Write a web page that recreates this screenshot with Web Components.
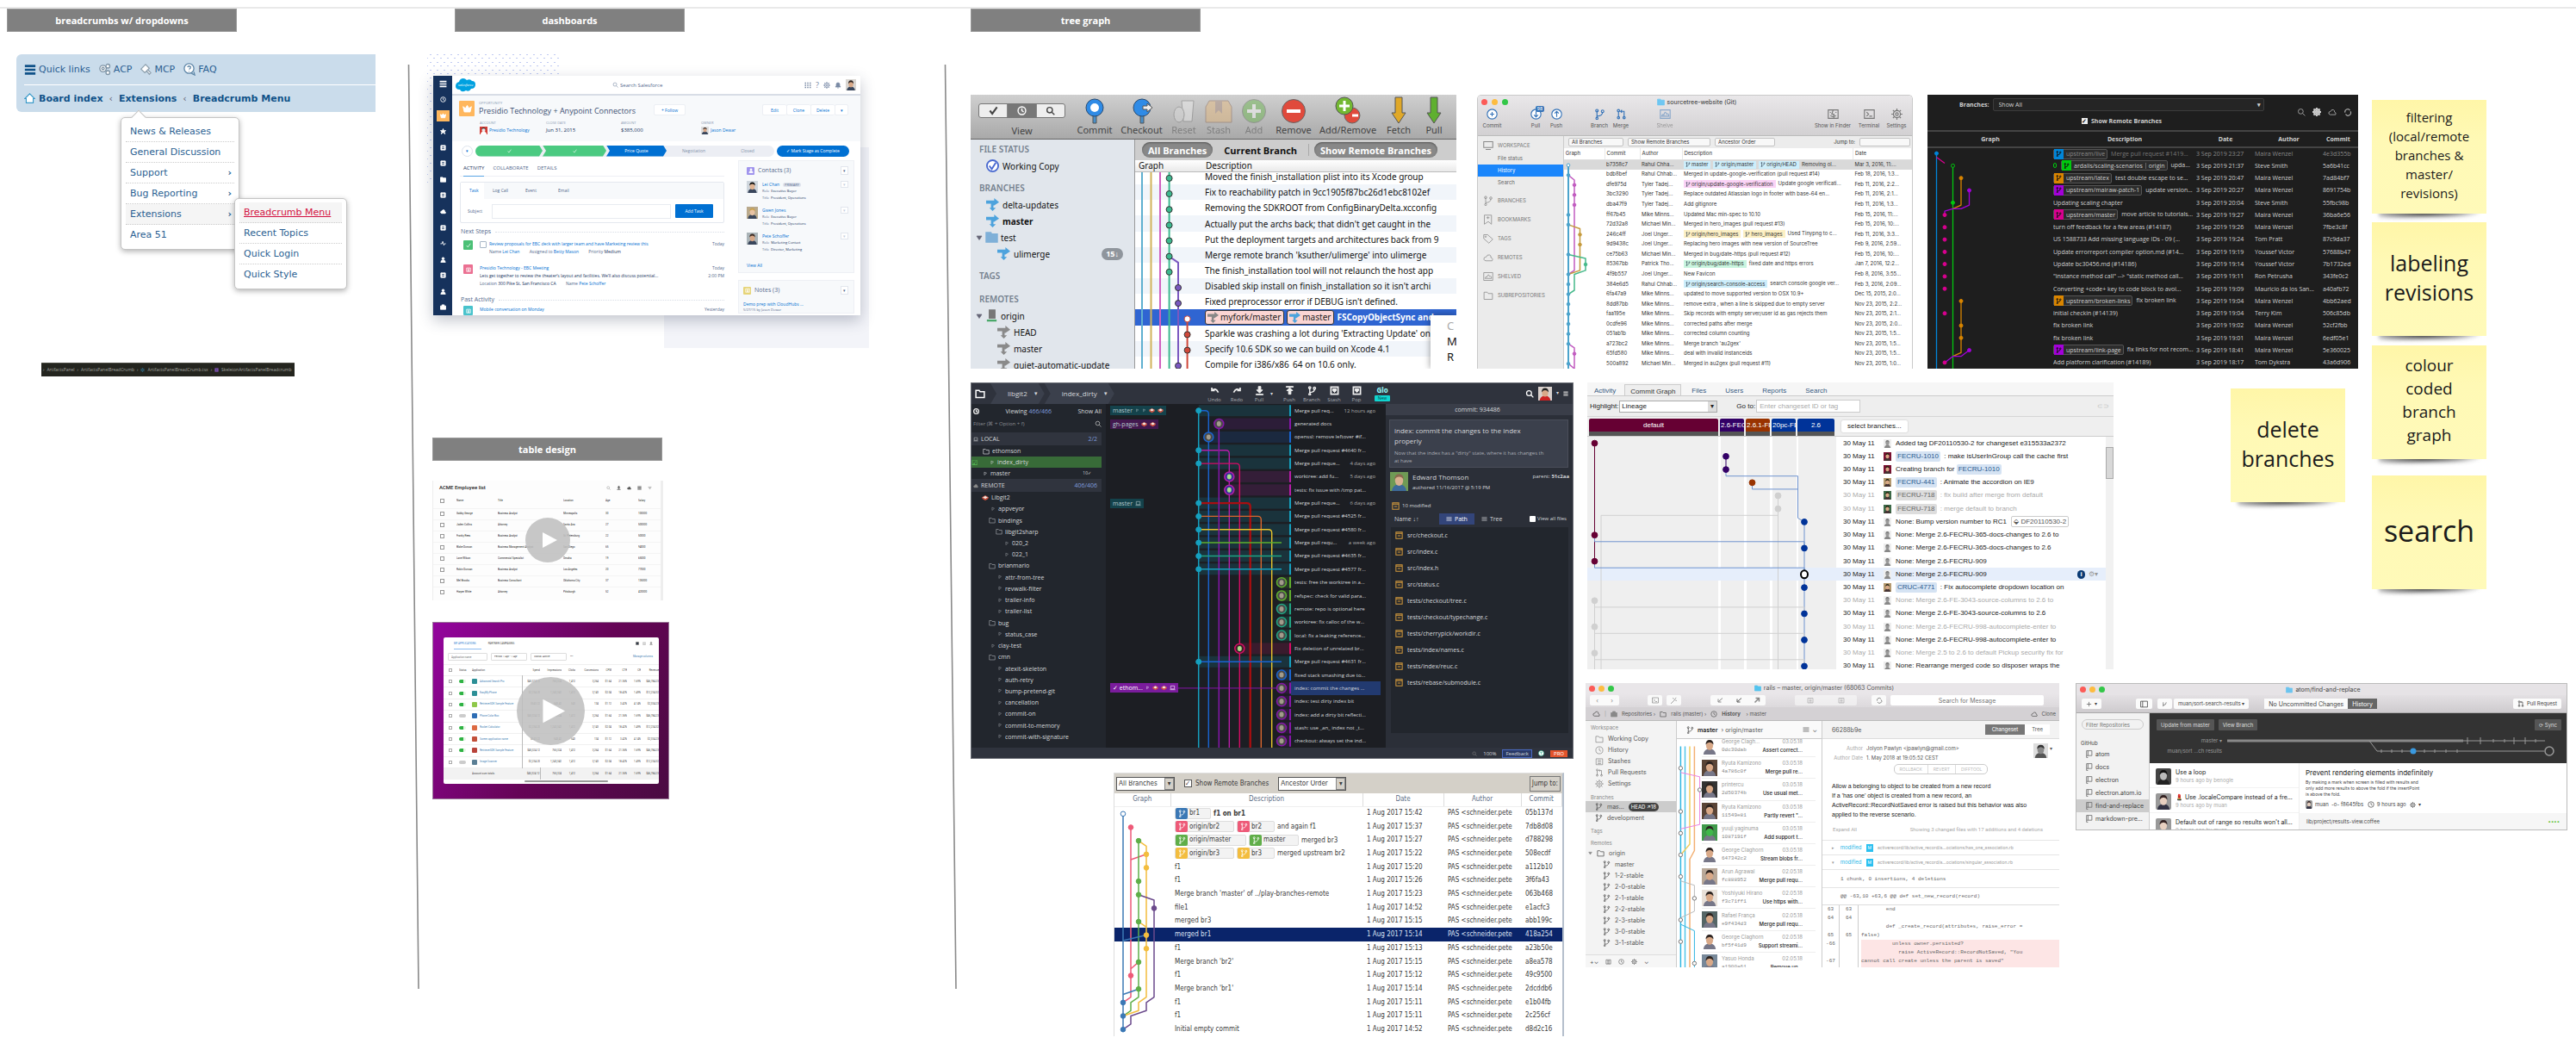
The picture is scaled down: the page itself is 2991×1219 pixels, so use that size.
<!DOCTYPE html>
<html lang="en">
<head>
<meta charset="utf-8">
<title>Research board</title>
<style>
html,body{margin:0;height:100%}
body{background:#fff;font-family:"Open Sans","Noto Sans",sans-serif;color:#222}
/* Free canvas: each captured window is pinned on the board */
research-board>*{position:absolute}
.t1{left:8px;top:10px}.t2{left:528px;top:10px}.t3{left:1127px;top:10px}.t4{left:502px;top:508px}
crumb-nav{left:19px;top:63px;width:417px}
editor-crumbs{left:48px;top:421px;width:294px}
crm-dashboard{left:496px;top:59px;width:513px;height:345px}
employee-table{left:502px;top:558px;width:268px;height:139px}
campaign-table{left:502px;top:722px;width:275px;height:206px}
tree-classic{left:1127px;top:110px;width:564px;height:318px}
tree-modern{left:1715px;top:110px;width:506px;height:318px}
git-graph{left:2238px;top:110px;width:500px;height:318px}
kraken-client{left:1127px;top:444px;width:700px;height:437px}
commit-graph{left:1843px;top:444px;width:611px;height:333px}
tower-client{left:1841px;top:793px;width:550px;height:330px}
hub-client{left:2410px;top:793px;width:571px;height:171px}
tree-windows{left:1293px;top:897px;width:523px;height:306px}
.n1{left:2754px;top:116px;--size:15px;--line:22px}
.n2{left:2754px;top:258px;--size:25px;--line:34px}
.n3{left:2754px;top:401px;--size:19px;--line:27px}
.n4{left:2754px;top:552px;--size:34px;--line:46px}
.n5{left:2590px;top:451px;--size:25px;--line:34px}
</style>
</head>
<body>
<research-board>
  <board-tag class="t1">breadcrumbs w/ dropdowns</board-tag>
  <board-tag class="t2">dashboards</board-tag>
  <board-tag class="t3">tree graph</board-tag>
  <board-tag class="t4">table design</board-tag>
  <crumb-nav></crumb-nav>
  <editor-crumbs></editor-crumbs>
  <crm-dashboard></crm-dashboard>
  <employee-table></employee-table>
  <campaign-table></campaign-table>
  <tree-classic></tree-classic>
  <tree-modern></tree-modern>
  <git-graph></git-graph>
  <kraken-client></kraken-client>
  <commit-graph></commit-graph>
  <tower-client></tower-client>
  <hub-client></hub-client>
  <tree-windows></tree-windows>
  <sticky-note class="n1">filtering<br>(local/remote<br>branches &amp;<br>master/<br>revisions)</sticky-note>
  <sticky-note class="n2">labeling<br>revisions</sticky-note>
  <sticky-note class="n3">colour<br>coded<br>branch<br>graph</sticky-note>
  <sticky-note class="n4">search</sticky-note>
  <sticky-note class="n5">delete<br>branches</sticky-note>
</research-board>
<script>
const base=`
:host,*,::before,::after{box-sizing:border-box}
:host{display:block;overflow:hidden}
button,input,select{font:inherit;color:inherit;border:0;padding:0;margin:0;background:none;appearance:none;border-radius:0;min-width:0}
a{color:inherit;text-decoration:none}
ul,ol{list-style:none;margin:0;padding:0}
p,h2,h3{margin:0;font:inherit}
table{border-collapse:collapse;table-layout:fixed;width:100%}
td,th{padding:0;font-weight:400;text-align:left;white-space:nowrap;overflow:hidden;text-overflow:ellipsis;line-height:1}
svg{display:block;flex:none}
.row{display:flex;align-items:center}
.grow{flex:1;min-width:0}
`;
const define=(name,css,html)=>customElements.define(name,class extends HTMLElement{
  connectedCallback(){
    if(this.shadowRoot)return;
    this.attachShadow({mode:'open'}).innerHTML='<style>'+base+css+'</style>'+html;
  }
});
const icons={
  menu:'<path d="M1 3h14M1 8h14M1 13h14" stroke-width="3"/>',
  home:'<path d="M1 8 8 1l7 7h-2v6H3V8z" fill="#fff"/>',
  gears:'<circle cx="6" cy="7" r="4" fill="#fff"/><circle cx="6" cy="7" r="1.5"/><circle cx="12" cy="4" r="2.4" fill="#fff"/><circle cx="12" cy="12" r="2.4" fill="#fff"/>',
  hammer:'<path d="M2 7 8 1l5 5-6 6zM9 9l4 5 2-2-4-4" fill="#fff"/>',
  faq:'<circle cx="8" cy="7" r="6" fill="#fff"/><path d="M6 5q2-2 4 0 0 2-2 3M8 10v1M11 13l4 2-1-4"/>',
  search:'<circle cx="7" cy="7" r="4.6"/><path d="m10.500 10.500 4.500 4.500"/>',
  check:'<path d="m2 8 4 5 8-11"/>',
  tick:'<circle cx="8" cy="8" r="7" fill="#fff"/><path d="m4 8 3 4 5-8"/>',
  clock:'<circle cx="8" cy="8" r="6.500"/><path d="M8 4v4l3 2"/>',
  gear:'<circle cx="8" cy="8" r="5" /><circle cx="8" cy="8" r="2"/><path d="M8 0v3M8 13v3M0 8h3M13 8h3M2.300 2.300l2 2M11.700 11.700l2 2M2.300 13.700l2-2M11.700 4.300l2-2"/>',
  bell:'<path d="M2 12h12l-2-3V6a4 4 0 0 0-8 0v3zM6 14h4" fill="currentColor"/>',
  grid:'<path d="M1 3h3M6.500 3h3M12 3h3M1 8h3M6.500 8h3M12 8h3M1 13h3M6.500 13h3M12 13h3" stroke-width="3"/>',
  crown:'<path d="m1 4 4 3 3-5 3 5 4-3-2 9H3z" fill="currentColor"/>',
  star:'<path d="m8 1 2 5h5l-4 3 2 6-5-4-5 4 2-6-4-3h5z" fill="currentColor"/>',
  box:'<path d="M2 2h12v12H2z" fill="currentColor"/><path d="M5 6h6M5 10h6" stroke="#16325c" stroke-width="2"/>',
  person:'<circle cx="8" cy="5" r="3" fill="currentColor"/><path d="M2 15q0-6 6-6t6 6z" fill="currentColor"/>',
  bag:'<path d="M1 5h14v9H1zM5 5V2h6v3" fill="currentColor"/>',
  pulse:'<path d="M1 9h4l2-6 3 10 2-4h3" stroke-width="2"/>',
  folder:'<path d="M1.500 3h5l1.500 2h6.500v9h-13z"/>',
  folderf:'<path d="M1 2h6l1 2h7v10H1z" fill="currentColor"/>',
  server:'<path d="M5 1h7v10H5z" fill="currentColor"/><path d="M2 14h12" stroke="#4aa86a" stroke-width="2.500"/>',
  branch:'<path d="M4 3v10M4 11q8 0 8-6"/><circle cx="4" cy="3" r="1.800"/><circle cx="4" cy="14" r="1.500"/><circle cx="12" cy="4" r="1.800"/>',
  merge:'<path d="M4 4v9M7 4h5v9M9 2 7 4l2 2"/><circle cx="4" cy="3" r="1.600"/><circle cx="4" cy="13" r="1.600"/><circle cx="12" cy="13" r="1.600"/>',
  tri:'<path d="M5 3v9l7-6z"/>',
  trid:'<path d="M2 4h12l-6 9z" fill="currentColor"/>',
  laptop:'<path d="M3 3h10v8H3zM1 13h14"/>',
  cloud:'<path d="M4 13q-4-1-2-5 2-1 3-1 1-4 5-3 3 1 2 4 4 1 2 5z"/>',
  cloudf:'<path d="M4 13q-4-1-2-5 2-1 3-1 1-4 5-3 3 1 2 4 4 1 2 5z" fill="currentColor"/>',
  undo:'<path d="M3 3v5h5M3 8q6-6 11 3" stroke-width="2.500"/>',
  redo:'<path d="M13 3v5H8M13 8Q7 2 2 11" stroke-width="2.500"/>',
  down:'<path d="M6 1h4v6h3l-5 5-5-5h3zM2 14h12v1H2z" fill="currentColor"/>',
  up:'<path d="M6 14h4V8h3L8 3 3 8h3zM2 1h12v1H2z" fill="currentColor"/>',
  stash:'<path d="M2 2h12v12H2z" stroke-width="2.500"/><path d="M5 5h6v3l-3 3-3-3z" fill="currentColor"/>',
  plus:'<path d="M8 2v12M2 8h12"/>',
  tag:'<path d="M1 2h6l8 7-6 6-8-7z"/><circle cx="4" cy="5" r="1"/>',
  mark:'<path d="M2 1h11v14l-5-4-6 4zM5 5h5M7.500 3v4"/>',
  screen:'<path d="M1 2h14v9H1zM4 14h8"/>',
  finder:'<path d="M1 2h14v12H1zM8 2l-2 6h3v6M4 5v1M12 5v1M4 10q4 3 8 0"/>',
  term:'<path d="M1 2h14v12H1zM4 5l3 3-3 3M8 11h4"/>',
  shelf:'<path d="M1 2h14v12H1zM3 11q1-4 3-2 2-7 4-1 3-2 3 3z"/>',
  circp:'<circle cx="8" cy="8" r="7" fill="#fff"/><path d="M8 5v6M5 8h6"/>',
  circu:'<circle cx="8" cy="8" r="7" fill="#fff"/><path d="M8 12V5M5 7l3-3 3 3"/>',
  circd:'<circle cx="8" cy="8" r="7" fill="#fff"/><path d="M8 4v7M5 9l3 3 3-3"/>',
  list:'<path d="M2 3h12v11H2zM5 6h6M5 9h6M5 12h6"/>',
  lines:'<path d="M1 4h14M1 8h14M1 12h14" stroke-width="1.500"/>',
  repo:'<path d="M3 1h11v10H3zM3 11v4h3M6 1v10"/>',
  side:'<path d="M1 2h14v12H1zM5 2v12"/>',
  ar1:'<path d="M14 3 5 11M4 5v7h7" stroke-width="2"/>',
  ar2:'<path d="M3 13 12 4M5 3h8v8" stroke-width="3"/>',
  sync:'<path d="M3 9a5 5 0 0 1 9-4M13 7a5 5 0 0 1-9 5" stroke-width="2"/>',
  fork:'<path d="M4 14V3M4 11q8-1 8-8"/>',
  cake:'<path d="m1 7 7-4 7 4-7 4z" fill="#f4ece6" stroke="#d5523e"/><path d="m1 7 7 4 7-4v3l-7 4-7-4z" fill="#d5523e" stroke="none"/>',
  mod:'<path d="M1.500 1.500h13v13h-13zM1.500 4h13M5 9h6" stroke-width="1.800"/>',
  wand:'<path d="m2 14 9-9M6 2l2 3M13 2l-3 2M14 8l-3-1"/>'
};
const ic=(n,s=10,c='currentColor',w=1.4)=>`<svg width="${s}" height="${s}" viewBox="0 0 16 16" fill="none" stroke="${c}" stroke-width="${w}" style="color:${c}" aria-hidden="true">${icons[n]}</svg>`;
const av=(w,h,bg,skin='#d9a988',hair='#2c2320',shirt='#39465c',r=0)=>`<svg width="${w}" height="${h}" viewBox="0 0 20 20" preserveAspectRatio="none" style="border-radius:${r}px" aria-hidden="true"><rect width="20" height="20" fill="${bg}"/><path d="M2 20q1-7 8-7t8 7z" fill="${shirt}"/><ellipse cx="10" cy="9" rx="4.500" ry="5.500" fill="${skin}"/><path d="M5 8q0-6 5-6t5 6q-2-3-5-3T5 8z" fill="${hair}"/></svg>`;
/* Lane graph: columns are x positions, rows are evenly spaced */
const graph=(w,h,n,cols,paths,dots,o={})=>{
  const P=([c,r])=>cols[c]+' '+((r+.5)*h/n).toFixed(1);
  return `<svg class="graph" width="${w}" height="${h}" viewBox="0 0 ${w} ${h}" fill="none" stroke-linejoin="round" aria-hidden="true">${o.under||''}`+
   paths.map(([c,pts,sw])=>`<path d="M${pts.map(P).join('L')}" stroke="${c}" stroke-width="${sw||o.sw||1.5}"/>`).join('')+
   dots.map(([c,k,r,hol])=>`<circle cx="${cols[k]}" cy="${((r+.5)*h/n).toFixed(1)}" r="${o.r||3}" fill="${hol?(o.hole||'#fff'):c}" stroke="${hol?c:(o.edge||c)}" stroke-width="${o.dw||1}"/>`).join('')+(o.over||'')+'</svg>';
};
const play='<button class="play" aria-label="Play video"><svg viewBox="0 0 20 20" aria-hidden="true"><circle cx="10" cy="10" r="10" fill="#bdbdbd" fill-opacity=".85"/><path d="M7.700 6.500v7l6.500-3.500z" fill="#fff"/></svg></button>';

define('research-board',`
:host{position:relative;width:100%;height:100vh;min-height:1219px}
.rule{border-top:2px solid #e9e9e9;margin-top:8px}
svg{position:absolute;left:0;top:0}
`,`<div class="rule"></div><svg width="1120" height="1219" stroke="#8a8a8a" stroke-width="1.600" aria-hidden="true"><path d="M474.500 75 486 1148M1097.500 75 1110 1148"/></svg><slot></slot>`);

define('board-tag',`:host{width:267px;height:27px;background:#808080;border:1px solid #999;color:#fff;font:700 11px/25px "Open Sans",sans-serif;text-align:center}`,`<slot></slot>`);

define('sticky-note',`
:host{overflow:visible;width:133px;height:132px}
.note{position:relative;width:133px;height:132px;display:flex;align-items:center;justify-content:center;text-align:center;padding-bottom:5px;background:linear-gradient(#fff6a8,#fff9b5 35%,#fffab9);color:#1b1b1b;font:400 var(--size)/var(--line) "Open Sans",sans-serif}
.shade{position:absolute;left:8px;right:8px;bottom:-4px;height:14px;background:radial-gradient(ellipse at 45% 60%,rgba(20,20,20,.85),rgba(60,60,60,.5) 50%,transparent 75%);filter:blur(2px);transform:rotate(-1deg)}
`,`<div class="shade"></div><div class="note"><div><slot></slot></div></div>`);

define('crumb-nav',`
:host{overflow:visible;font:11px/24px "DejaVu Sans",sans-serif;color:#2b5f92}
nav{background:#cadceb;border-radius:6px 0 0 6px;padding-left:9px}
.r1{height:36px;border-bottom:1px solid #fff;gap:9px}
.r1 a{display:flex;align-items:center;gap:3px}
.r2{height:31px;font-weight:700;color:#105289;gap:7px}
.r2 a:first-child{display:flex;align-items:center;gap:4px}
.r2 i{font:400 11px "DejaVu Sans";color:#667}
.menu{position:absolute;background:#fff;border:1px solid #c4c4c4;border-radius:5px;padding:4px 5px;box-shadow:0 2px 6px rgba(0,0,0,.3)}
.main{left:121px;top:73px;width:138px}
.sub{left:253px;top:167px;width:131px}
.tip{position:absolute;left:136px;top:67px;width:12px;height:12px;background:#fff;transform:rotate(45deg);border:1px solid #c4c4c4;border-right:0;border-bottom:0;z-index:1}
li{height:24px;padding:0 3px 0 5px;border-bottom:1px dotted #ccc;display:flex;justify-content:space-between}
li:last-child{border:0}
.on{background:#f5f5f5}
.hot{color:#d31141;text-decoration:underline}
b{font-size:11px}
.sub{z-index:2}
`,`<nav><div class="row r1"><a href="#">${ic('menu',14,'#105289')}Quick links</a><a href="#">${ic('gears',15,'#7d93a5')}ACP</a><a href="#">${ic('hammer',14,'#8ea0ae')}MCP</a><a href="#">${ic('faq',15,'#5f87a8')}FAQ</a></div>
<div class="row r2"><a href="#">${ic('home',13,'#3b9ac9')}Board index</a><i>‹</i><a href="#">Extensions</a><i>‹</i><a href="#">Breadcrumb Menu</a></div></nav>
<ul class="menu main"><li><a href="#">News &amp; Releases</a></li><li><a href="#">General Discussion</a></li><li><a href="#">Support</a><b>›</b></li><li><a href="#">Bug Reporting</a><b>›</b></li><li class="on"><a href="#">Extensions</a><b>›</b></li><li><a href="#">Area 51</a></li></ul><div class="tip"></div>
<ul class="menu sub"><li class="on"><a class="hot" href="#">Breadcrumb Menu</a></li><li><a href="#">Recent Topics</a></li><li><a href="#">Quick Login</a></li><li><a href="#">Quick Style</a></li></ul>`);

define('editor-crumbs',`
:host{background:#24251f;height:16px;color:#a5a5a0;font:5px/15px "Open Sans",sans-serif;border-top:1px solid #4a4b44}
.row{gap:3px;padding-left:2px;white-space:nowrap;height:15px}
`,`<div class="row"><i>›</i><span>ArtifactsPanel</span><i>›</i><span>ArtifactsPanelBreadCrumb</span><i>›</i>${ic('gear',5,'#3c8fb8')}<span>ArtifactsPanelBreadCrumb.tsx</span><i>›</i>${ic('box',5,'#8a55b8')}<span>SkeletonArtifactsPanelBreadcrumb</span></div>`);

const person=(n,b,r,t,a)=>`<li class="pers">${a}<div class="grow"><p class="nm"><a href="#">${n}</a>${b?'<em>PRIMARY</em>':''}</p><p>Role&nbsp; <b>${r}</b></p><p>Title&nbsp; <b>${t}</b></p></div><button class="dd" aria-label="More">▾</button></li>`;
define('crm-dashboard',`
:host{font:5px/8px "Open Sans",sans-serif;color:#54698d;padding:29px 10px 0 7px;overflow:visible;background:linear-gradient(#f3f4f9,#f3f4f9) right bottom/238px 233px no-repeat}
.dots{position:absolute;left:0;top:0;width:154px;height:156px;background:radial-gradient(circle,#c0caf2 1px,transparent 1px) 0 0/8px 9px,radial-gradient(circle,#c0caf2 1px,transparent 1px) 4px 4px/8px 9px}
.win{position:relative;width:496px;height:278px;display:flex;background:#fff;box-shadow:0 6px 16px rgba(40,50,80,.28);overflow:hidden}
.rail{width:22px;background:#16325c;color:#fff;display:grid;grid-auto-rows:1fr;place-items:center}
.rail .on{background:#ffb75d;width:15px;height:13px;display:grid;place-items:center}
.main{width:474px;display:flex;flex-direction:column}
a{color:#0070d2}
b{color:#16325c;font-weight:400}
header{height:23px;border-bottom:2px solid #d8dde6;display:flex;align-items:center;padding:0 5px 0 4px;color:#7a8aa5;flex:none}
header label{margin-left:auto;display:flex;gap:2px;align-items:center}
header input{font-size:6px;width:56px;color:#54698d}
header input::placeholder{color:#54698d;opacity:1}
.acts{margin-left:auto;display:flex;align-items:center;gap:5px;font-size:9px}
.hi{height:53px;background:#f7f9fb;flex:none;padding:6px 14px 0 8px}
.hi .top{display:flex;gap:5px}
.opp{width:18px;height:18px;background:#ffb75d;display:grid;place-items:center;border-radius:1px}
small{font-size:4px;line-height:6px;display:block;color:#8a99b3}
h2{font-size:9px;line-height:12px;color:#3b4f72;white-space:nowrap}
.btn{background:#fff;border:1px solid #eceff4;color:#0070d2;height:13px;margin-top:4px;border-radius:2px}
.fl{width:37px;margin-left:auto;margin-right:84px}
.grp{display:flex}
.grp .btn{width:28px;border-right-width:0}
.grp .btn:last-child{width:16px;border-right-width:1px}
.facts{display:grid;grid-template-columns:77px 87px 93px 1fr;margin:5px 0 0 24px}
.facts small{margin-bottom:1px}
.facts p{display:flex;gap:2px;align-items:center;height:8px;font-size:5px}
.facts p b{font-size:6px}
.path{height:22px;flex:none;display:flex;align-items:center;padding-left:11px;gap:3px;font-size:5px}
.ci{width:13px;height:13px;border-radius:7px;border:1px solid #dde3ec;color:#0070d2}
.steps{display:grid;grid-template-columns:78px 74px 70px 63px 62px;height:13px;border-radius:7px;overflow:hidden;background:#eceef4}
.steps span{display:grid;place-items:center;color:#8493ab;clip-path:polygon(0 0,calc(100% - 4px) 0,100% 50%,calc(100% - 4px) 100%,0 100%,4px 50%)}
.steps .d{background:#4bca81;color:#fff}.steps .d:first-child{clip-path:polygon(0 0,calc(100% - 4px) 0,100% 50%,calc(100% - 4px) 100%,0 100%)}
.steps .c{background:#0070d2;color:#fff}
.mark{width:84px;height:13px;border-radius:7px;background:#0070d2;color:#fff}
.cols{display:flex;flex:1;padding-left:9px}
.left{width:307px;margin-right:16px}
.tabs{height:19px;border-bottom:1px solid #eef0f4;display:flex;gap:10px;font-size:6px;line-height:19px;padding-left:4px}
.tabs .on{color:#16325c;border-bottom:1px solid #5aa5e5;height:19px}
.comp{margin-top:6px;border:1px solid #e4e8ef;border-radius:2px;height:48px}
.ct{height:19px;background:#f7f9fb;display:flex;line-height:19px}
.ct span{width:38px;padding-left:10px}.ct .on{background:#fff;color:#0070d2;width:27px}
.cf{height:28px;display:flex;align-items:center;padding:0 12px 0 8px}
.cf label{width:28px}.cf input{flex:1;height:17px;border:1px solid #e8ebf1}
.cf button{width:44px;height:16px;background:#0070d2;color:#fff;margin-left:5px;border-radius:1px}
h3{font-size:7px;line-height:10px;display:flex;align-items:center;gap:5px;margin:5px 0 0 1px}
h3::after{content:"";flex:1;border-top:1px dotted #d8dde6}
.it{display:flex;gap:8px;margin:5px 0 0 4px;line-height:9px}
.it>i{width:11px;height:11px;border-radius:1px;flex:none;display:grid;place-items:center}
.it time{margin-left:auto;text-align:right}
.it input{width:8px;height:8px;border:1px solid #a8b7c7;border-radius:1px;vertical-align:middle;margin-right:3px}
.ind{padding-left:11px}.it p a,.it p b{margin-right:10px}.t a{margin:0!important}
.right{width:135px}
.card{background:#f7f9fb;border:1px solid #eef0f5;padding:5px 6px 0 9px}
.card+.card{margin-top:8px;padding-left:5px}
.ch{display:flex;align-items:center;gap:4px;font-size:7px;line-height:12px}
.ch i{width:9px;height:9px;border-radius:1px;display:grid;place-items:center}
.ch button,.dd{margin-left:auto;width:9px;height:10px;background:#fff;border:1px solid #e2e6ed;font-size:5px;line-height:7px}
.dd{color:#c5cddb;height:8px}
.pers{display:flex;gap:5px;margin-top:6px;height:24px}
.pers p{line-height:8px;font-size:4px;white-space:nowrap}.pers .nm{font-size:5px}
em{font:4px/5px "Open Sans";background:#dfe3ec;border-radius:3px;padding:0 2px;margin-left:4px}
`,`<div class="dots"></div><div class="win"><nav class="rail">${['menu','clock','crown','star','box','box','folderf','box','cloudf','box','pulse','person','box','person','bag'].map((n,k)=>`<span class="${k==2?'on':''}">${ic(n,k?7:9,'#fff',2)}</span>`).join('')}</nav>
<div class="main"><header><svg width="24" height="18" viewBox="0 0 24 18" aria-hidden="true"><path d="M5 14q-5 0-5-4t4-5q1-4 5-4 2 0 4 2 4-2 6 1 4 0 4 4 0 5-5 5-2 4-6 2-5 3-7-1z" fill="#00a1e0"/><text x="3" y="10" font-size="4" fill="#fff" font-style="italic">salesforce</text></svg><label>${ic('search',7)}<input placeholder="Search Salesforce" aria-label="Search Salesforce"></label><div class="acts">${ic('grid',8)}<span>?</span>${ic('gear',8,'#8a99b3',2)}${ic('bell',8)}${av(12,13,'#d9d6d2')}</div></header>
<div class="hi"><div class="top"><span class="opp">${ic('crown',11,'#fff')}</span><div><small>OPPORTUNITY</small><h2>Presidio Technology + Anypoint Connectors</h2></div><button class="btn fl">+ Follow</button><div class="grp"><button class="btn">Edit</button><button class="btn">Clone</button><button class="btn">Delete</button><button class="btn" aria-label="More actions">▾</button></div></div>
<div class="facts"><div><small>ACCOUNT</small><p>${av(9,9,'#d33b34','#eee','#333','#fff')}<a href="#">Presidio Technology</a></p></div><div><small>CLOSE DATE</small><p><b>Jun 31, 2015</b></p></div><div><small>AMOUNT</small><p><b>$385,000</b></p></div><div><small>OWNER</small><p>${av(9,9,'#ddd')}<a href="#">Jason Dewar</a></p></div></div></div>
<div class="path"><button class="ci" aria-label="Expand">▾</button><div class="steps"><span class="d">${ic('check',5,'#fff',2)}</span><span class="d">${ic('check',5,'#fff',2)}</span><span class="c">Price Quote</span><span>Negotiation</span><span>Closed</span></div><button class="mark">✓ Mark Stage as Complete</button></div>
<div class="cols"><div class="left"><div class="tabs"><span class="on">ACTIVITY</span><span>COLLABORATE</span><span>DETAILS</span></div>
<div class="comp"><div class="ct"><span class="on">Task</span><span>Log Call</span><span>Event</span><span>Email</span></div><div class="cf"><label for="sj">Subject</label><input id="sj"><button>Add Task</button></div></div>
<h3>Next Steps</h3>
<div class="it"><i style="background:#4bc076">${ic('check',6,'#fff',2)}</i><div><p class="t"><input type="checkbox" aria-label="Done"><a href="#">Review proposals for EBC deck with larger team and have Marketing review this</a></p><p class="ind">Name <a href="#">Lei Chan</a> Assigned to <a href="#">Betty Mason</a> Priority <b>Medium</b></p></div><time>Today</time></div>
<div class="it" style="margin-top:10px"><i style="background:#eb7092">${ic('list',6,'#fff',2)}</i><div><p class="t"><a href="#">Presidio Technology - EBC Meeting</a></p><p><b>Lets get together to review the theater’s layout and facilities. We’ll also discuss potential...</b></p><p>Location <b>300 Pike St, San Francisco CA</b> Name <a href="#">Pete Schoffer</a></p></div><time>Today<br>2:00 PM</time></div>
<h3 style="margin-top:9px">Past Activity</h3>
<div class="it" style="margin-top:2px"><i style="background:#48c3cc">${ic('list',6,'#fff',2)}</i><p class="t"><a href="#">Mobile conversation on Monday</a></p><time>Yesterday</time></div></div>
<div class="right"><div class="card" style="height:131px"><div class="ch"><i style="background:#a094ed">${ic('person',6,'#fff')}</i>Contacts (3)<button aria-label="More">▾</button></div><ul>${person('Lei Chan',1,'Executive Buyer','President, Operations',av(13,14,'#cfd6dd','#e0b493','#111'))}${person('Gwen Jones',0,'Executive Buyer','President, Operations',av(13,14,'#b9a98c','#e8c3a4','#c9a24f'))}${person('Pete Schoffer',0,'Marketing Contact','Director, Marketing',av(13,14,'#aab4b8','#d7a888','#3b2a22'))}</ul><p style="margin-top:10px"><a href="#">View All</a></p></div>
<div class="card"><div class="ch"><i style="background:#e6d478">${ic('list',6,'#fff',2)}</i>Notes (3)<button aria-label="More">▾</button></div><p style="margin-top:6px"><a href="#">Demo prep with CloudHubs ...</a></p><p style="font-size:4px;line-height:6px">5/27/15 by Jason Dewar</p></div></div></div></div></div>`);

const emp=[['Gabby George','Business Analyst','Minneapolis',30,'100000'],['Jaden Collins','Attorney','Santa Ana',27,'500000'],['Franky Rees','Business Analyst','St. Petersburg',22,'50000'],['Blake Duncan','Business Management Analyst','San Diego',65,'94000'],['Lane Wilson','Commercial Specialist','Omaha',19,'65000'],['Robin Duncan','Business Analyst','Los Angeles',20,'77000'],['Mel Brooks','Business Consultant','Oklahoma City',37,'135000'],['Harper White','Attorney','Pittsburgh',52,'420000']];
define('employee-table',`
:host{background:#fdfdfd;font:500 3px/1 Roboto,sans-serif;color:#222;border:solid #eee;border-width:0 3px 0 1px}
.hd{height:16px;padding:0 10px 0 7px;gap:7px;font-size:5px;color:#222}
.hd strong{margin-right:auto;font-weight:500;font-size:6px}
tr{height:13px}thead tr{height:16px}
tbody tr{border-top:1px solid #f4f4f4}
input{width:5px;height:5px;border:1px solid #999;display:block;margin-left:8px}
.play{position:absolute;left:107px;top:43px;width:52px;height:52px}
`,`<div class="row hd"><strong>ACME Employee list</strong>${ic('search',5,'#888')}${ic('down',5,'#666')}${ic('cloudf',5,'#555')}${ic('menu',5,'#555')}${ic('trid',5,'#bbb')}</div><table><colgroup><col style="width:27px"><col style="width:48px"><col style="width:76px"><col style="width:49px"><col style="width:38px"><col></colgroup><thead><tr><th><input type="checkbox" aria-label="All"></th><th>Name</th><th>Title</th><th>Location</th><th>Age</th><th>Salary</th></tr></thead><tbody>${emp.map(r=>`<tr><td><input type="checkbox" aria-label="${r[0]}"></td>${r.map(c=>`<td>${c}</td>`).join('')}</tr>`).join('')}</tbody></table>${play}`);

const camp=[['Advanced Search Pro','#2c8f96',1],['EasyMy Phone','#2c8f96',1],['RetrieverSDK Sample Feature','#8fc84a',1],['Phone Color Box','#2e6db4',0],['Rocket Calculator','#dd6a42',1],['Screen application name','#c2503a',1],['RetrieverSDK Sample Feature','#b8433a',1],['Image Scanner','#5b7f95',0]];
const nums=[['$45,324.12','765,324','1,412','3,264','$1.64','21.36%','1.69%','$46,784.23'],['$2,234.20','1,243,342','1,412','3,143','$2.04','18.42%','1.49%','$12,234.32'],['$543.22','543,42','543','134','$1.12','3.42%','4.14%','$2,334.23']];
define('campaign-table',`
:host{background:linear-gradient(120deg,#94059e,#650456 55%,#4a0b42);border:1px solid #9a7a98;padding:17px 11px 17px 12px;font:3px/1 Roboto,sans-serif;color:#444}
.card{background:#fff;border-radius:2px;height:170px;overflow:hidden;display:flex;flex-direction:column}
.tb{height:14px;padding:0 7px 0 12px;gap:4px}.tb a{color:#2f80d0;border-bottom:1px solid #8cbcf0;line-height:12px;padding-right:6px;margin-right:4px}
.fb{height:17px;padding:0 7px 0 5px;gap:4px}
.fb input,.fb select{height:9px;border:1px solid #ddd;width:46px;padding:0 3px;border-radius:1px}
.fb select{width:42px}
.fb a,td a{color:#3f7fb5}
table{height:134px}
tr{border-top:1px solid #f0f0f0;height:13px}
.n{text-align:right}
td:nth-child(4){border-right:1px solid #bbb}
.tot{background:#f2f2f2}
input[type=checkbox]{width:4px;height:4px;border:1px solid #aaa;padding:0;display:block;margin-left:6px}
.sw{display:block;width:8px;height:4px;border-radius:2px;background:#ccc}.sw.on{background:linear-gradient(90deg,#2fb344 60%,#e5f5e5 60%)}
.ap{display:block;width:6px;height:6px;border-radius:1px}
.sb{width:97px;height:2px;background:#999;margin:1px 0 0 94px;border-radius:1px}
.play{position:absolute;left:97px;top:63px;width:79px;height:79px}
`,`<div class="card"><div class="row tb"><a href="#">MY APPLICATIONS</a><span>PARTNER CAMPAIGNS</span><span class="grow"></span>${ic('box',4,'#444')}${ic('list',4,'#888')}${ic('down',4,'#888')}</div><div class="row fb"><input placeholder="Application name" aria-label="Application name"><select aria-label="Period"><option>Period: 1 Apr - 1 Apr</option></select><select aria-label="Status"><option>Status: Active</option></select><b>•••</b><span class="grow"></span><a href="#">Manage columns</a></div>
<table><colgroup><col style="width:18px"><col style="width:15px"><col style="width:9px"><col style="width:49px"><col style="width:21px"><col style="width:25px"><col style="width:16px"><col style="width:27px"><col style="width:15px"><col style="width:18px"><col style="width:16px"><col></colgroup><thead><tr><th><input type="checkbox" aria-label="All"></th><th>Status</th><th colspan="2">Application</th>${['Spend','Impressions','Clicks','Conversions','CPM','CTR','CR','Revenue'].map(h=>`<th class="n">${h}</th>`).join('')}</tr></thead><tbody>${camp.map((c,k)=>`<tr><td><input type="checkbox" aria-label="${c[0]}"></td><td><i class="sw ${c[2]?'on':''}"></i></td><td><i class="ap" style="background:${c[1]}"></i></td><td><a href="#">${c[0]}</a></td>${nums[k%3].map(v=>`<td class="n">${v}</td>`).join('')}</tr>`).join('')}<tr class="tot"><td></td><td></td><td colspan="2">Account sum totals</td>${nums[0].map(v=>`<td class="n">${v}</td>`).join('')}</tr></tbody></table><div class="sb"></div></div>${play}`);

/* Classic mac client */
const pin=(f,x='')=>`<svg width="26" height="30" viewBox="0 0 26 30" aria-hidden="true"><path d="M11 20h4v9h-4z" fill="#4a90c8" stroke="#555"/><circle cx="13" cy="11" r="10" fill="#2f8be6" stroke="#2a4b70"/>${f}${x}</svg>`;
const disc=(c,p)=>`<svg width="30" height="30" viewBox="0 0 30 30" aria-hidden="true"><circle cx="15" cy="15" r="13.500" fill="${c}" stroke="#666"/><path d="${p}" stroke="#fff" stroke-width="4"/></svg>`;
const arr=c=>`<svg width="18" height="32" viewBox="0 0 18 32" aria-hidden="true"><path d="M5 1h8v18h4L9 31 1 19h4z" fill="${c}" stroke="#555"/></svg>`;
const tool=(w,i,t,dim)=>`<button class="tool${dim?' dim':''}" style="width:${w}px"><span>${i}</span>${t}</button>`;
const cl=['Moved the finish_installation plist into its Xcode group','Fix to reachability patch in 9cc1905f87bc26d1ebc8102ef','Removing the SDKROOT from ConfigBinaryDelta.xcconfig','Actually put the archs back; that didn\'t get caught in the','Put the deployment targets and architectures back from 9','Merge remote branch \'ksuther/ulimerge\' into ulimerge','The finish_installation tool will not relaunch the host app','Disabled skip install on finish_installation so it isn\'t archi','Fixed preprocessor error if DEBUG isn\'t defined.','','Sparkle was crashing a lot during \'Extracting Update\' on','Specify 10.6 SDK so we can build on Xcode 4.1','Compile for i386/x86_64 on 10.6 only.'];
const br=(c='#4da3dd',s=15)=>`<svg width="${s}" height="${s}" viewBox="0 0 16 16" aria-hidden="true"><path d="M0 3h10V0l6 5-6 4H9v3h3l-4 4-4-4h2V7H0z" fill="${c}"/></svg>`;
define('tree-classic',`
:host{font:10px/10px "Noto Sans","Open Sans",sans-serif;color:#111;background:#fff}
.bar{height:52px;background:linear-gradient(#cfcfcf,#a9a9a9);border-bottom:1px solid #666;display:flex;padding-left:9px}
.seg{width:101px;margin-right:4px;font-size:11px;text-align:center;color:#444}
.seg div{display:flex;margin-top:10px;height:17px;border:1px solid #777;border-radius:3px;overflow:hidden;background:#eee}
.seg button{flex:1;display:grid;place-items:center}.seg button+button{border-left:1px solid #888}.seg .on{background:#777}
.seg p{line-height:30px}
.tool{display:flex;flex-direction:column;align-items:center;font-size:11px;line-height:14px;color:#444;white-space:nowrap}
.tool span{height:33px;margin-top:1px;display:grid;place-items:end}.dim{opacity:.45}
.bd{display:flex;height:266px}
aside{width:191px;background:#e1e6ec;border-right:1px solid #999;overflow:hidden;flex:none;padding-top:2px}
aside h3{font-size:10px;font-weight:600;color:#76828f;padding-left:10px;line-height:19px;margin-top:7px;white-space:nowrap}
aside h3:first-child{margin-top:0}
aside li{display:flex;align-items:center;height:19px;gap:4px;padding-left:18px;white-space:nowrap}
aside .n{padding-left:31px}aside .f{padding-left:6px;gap:3px}
.bdg{margin-left:auto;margin-right:13px;background:#8f959c;color:#fff;border-radius:7px;font:700 9px/14px "Open Sans";padding:0 5px}
.main{flex:1;min-width:0}
.flt{height:24px;background:#cdcdcd;display:flex;align-items:center;padding-left:8px;font:700 11px/1 "Open Sans",sans-serif;white-space:nowrap}
.pill{background:#888;color:#fff;border-radius:9px;height:18px;padding:0 7px;box-shadow:inset 0 1px 2px #555}
.flt .cb{margin:0 13px}
.flt .sp{border-left:1px solid #aaa;height:14px;margin-right:6px}
.hd{position:relative;z-index:1;height:14px;background:linear-gradient(#fff,#e9e9e9);border-bottom:1px solid #bbb;display:grid;grid-template-columns:78px 1fr;line-height:13px;padding-left:4px}
.ls{display:grid;margin-top:-4px}
.ls>*{grid-area:1/1}
ol{display:grid;grid-auto-rows:1fr;height:236px}
li.l{padding-left:81px;display:flex;align-items:center;gap:3px;white-space:nowrap;overflow:hidden}
li.l:nth-child(even){background:#f1f5fa}
li.l.sel{background:#2f65d2;color:#fff;font-weight:700}
.lb{display:flex;align-items:center;gap:2px;background:#fbd5d3;border:1px solid #333;border-radius:3px;color:#222;font-weight:400;height:17px;padding:0 3px 0 2px}
.ctx{position:absolute;right:0;bottom:0;width:30px;height:62px;background:#fff;box-shadow:0 0 8px rgba(0,0,0,.4);padding:3px 0 0 19px;font-size:13px;line-height:18px}
`,`<div class="bar"><div class="seg"><div><button aria-label="File status">${ic('check',11,'#444',3)}</button><button class="on" aria-label="Log">${ic('clock',11,'#fff',2)}</button><button aria-label="Search">${ic('search',11,'#444',2)}</button></div><p>View</p></div>
${tool(60,pin('<circle cx="13" cy="11" r="5" fill="#fff"/>'),'Commit')}${tool(49,pin('','<path d="M14 9h5V6l6 5-6 5v-3h-5z" fill="#eee" stroke="#555"/>'),'Checkout')}${tool(49,'<svg width="26" height="30" viewBox="0 0 26 30" aria-hidden="true"><path d="M10 3h14l-2 24H12z" fill="#eee" stroke="#777"/><ellipse cx="7" cy="19" rx="6" ry="9" fill="#ddd" stroke="#777"/></svg>','Reset',1)}${tool(32,'<svg width="32" height="30" viewBox="0 0 32 30" aria-hidden="true"><path d="M5 3h22l4 7v18H1V10z" fill="#e8b878" stroke="#865"/><path d="M12 3h8v15l-4-4-4 4z" fill="#a87"/></svg>','Stash',1)}${tool(50,disc('#63b345','M15 7v16M7 15h16'),'Add',1)}${tool(42,disc('#e04a3c','M7 15h16'),'Remove')}${tool(84,'<svg width="30" height="32" viewBox="0 0 30 32" aria-hidden="true"><circle cx="20" cy="22" r="9" fill="#e04a3c" stroke="#666"/><path d="M20 22h7" stroke="#fff" stroke-width="3"/><circle cx="11" cy="11" r="10" fill="#73b832" stroke="#555"/><path d="M11 5v12M5 11h12" stroke="#fff" stroke-width="3"/></svg>','Add/Remove')}${tool(34,arr('#e0a828'),'Fetch')}${tool(48,arr('#5fb030'),'Pull')}</div>
<div class="bd"><aside><h3>FILE STATUS</h3><ul><li>${ic('tick',15,'#4a6ad0',2)}Working Copy</li></ul><h3>BRANCHES</h3><ul><li>${br()}delta-updates</li><li>${br()}<b>master</b></li><li class="f">${ic('trid',8,'#667')}${ic('folderf',15,'#7fb0d8')}test</li><li class="n">${br()}ulimerge<span class="bdg">15↓</span></li></ul><h3>TAGS</h3><h3 style="margin-top:8px">REMOTES</h3><ul><li class="f">${ic('trid',8,'#667')}${ic('server',15,'#777')}origin</li><li class="n">${br('#8a8a8a')}HEAD</li><li class="n">${br('#8a8a8a')}master</li><li class="n">${br('#8a8a8a')}quiet-automatic-update</li></ul></aside>
<div class="main"><div class="flt"><button class="pill">All Branches</button><button class="cb">Current Branch</button><span class="sp"></span><button class="pill">Show Remote Branches</button></div><div class="hd"><span>Graph</span><span>Description</span></div><div class="ls"><ol>${cl.map((t,k)=>k==9?`<li class="l sel"><span class="lb">${br('#888',13)}myfork/master</span><span class="lb">${br('#4da3dd',13)}master</span>FSCopyObjectSync and</li>`:`<li class="l">${t}</li>`).join('')}</ol>
${graph(78,236,13,[8,18.5,29,39.6,50,60.6],[['#5fb0d0',[[0,-1],[0,13]],2],['#d1b35a',[[1,-1],[1,13]],2],['#d060c0',[[2,-1],[2,13]],2],['#3cb88f',[[3,-1],[3,13]],2],['#7a58c0',[[3,5.1],[4,5.5],[4,13]],2],['#d0483a',[[5,9],[5,13]],2]],[...[0,1,2,3,4,5,6].map(r=>['#3cb88f',3,r+.1]),['#7a58c0',4,7.1],['#7a58c0',4,8.1],['#d0483a',5,9.1,1],['#d0483a',5,10.1],['#d0483a',5,11.1],['#7a58c0',4,12.1]],{r:3.5,edge:'#333'})}</div></div></div><div class="ctx"><span style="color:#aaa">C</span><br>M<br>R</div>`);

/* Modern mac client */
const ref=(t,c)=>`<span class="ref" style="background:${c}">${ic('branch',6,'#345')}${t}</span>`;
const mo=[['b7358c7','Rahul Chha...',ref('master','#cdeefb')+ref('origin/master','#cdeefb')+ref('origin/HEAD','#cdeefb')+'Removing ol...','Mar 3, 2016, 11:...'],['bdb8bef','Rahul Chhab...','Merged in update-google-verification (pull request #14)','Feb 18, 2016, 1:3...'],['dfe975d','Tyler Tadej...',ref('origin/update-google-verification','#fbd3f6')+'Update google verificati...','Feb 11, 2016, 2:2...'],['3bc3290','Tyler Tadej...','Replace outdated Atlassian logo in footer with base-64 en...','Feb 11, 2016, 2:1...'],['dba47f9','Tyler Tadej...','Add gitignore','Feb 11, 2016, 1:3...'],['ff67b45','Mike Minns...','Updated Mac min-spec to 10.10','Feb 15, 2016, 11:...'],['72d32a8','Michael Min...','Merged in hero_images (pull request #13)','Feb 15, 2016, 10:...'],['246c4ff','Joel Unger...',ref('origin/hero_images','#fdf0c4')+ref('hero_images','#fdf0c4')+'Used Tinypng to c...','Feb 11, 2016, 3:3...'],['9d9438c','Joel Unger...','Replacing hero images with new version of SourceTree','Feb 9, 2016, 2:59...'],['ce75b63','Michael Min...','Merged in bug/date-https (pull request #12)','Feb 15, 2016, 10:...'],['85367bb','Patrick Tho...',ref('origin/bug/date-https','#c9f5df')+'fixed date and https errors','Jan 7, 2016, 12:2...'],['4f9b557','Joel Unger...','New Favicon','Feb 8, 2016, 3:55...'],['384e6d5','Rahul Chhab...',ref('origin/search-console-access','#cdeefb')+'search console google ver...','Feb 3, 2016, 2:09...'],['6fa47a9','Mike Minns...','updated to move supported version to OSX 10.9+','Dec 15, 2015, 2:0...'],['8dd87bb','Mike Minns...','remove extra , when a line is skipped due to empty server','Nov 23, 2015, 2:2...'],['faa195e','Mike Minns...','Skip records with empty server/user id as gas rejects them','Nov 23, 2015, 2:1...'],['0cdfe96','Mike Minns...','corrected paths after merge','Nov 23, 2015, 2:0...'],['051ab1b','Mike Minns...','corrected column counting','Nov 23, 2015, 1:5...'],['a723bc2','Mike Minns...','Merge branch \'au2gex\'','Nov 23, 2015, 1:5...'],['65fd580','Mike Minns...','deal with invalid instanceids','Nov 23, 2015, 1:5...'],['500a892','Michael Min...','Merged in au2gex (pull request #11)','Nov 23, 2015, 1:0...']];
const lights='<span class="lights"><i></i><i></i><i></i></span>';
const lightcss='.lights{display:flex;gap:var(--lg,5px)}.lights i{width:7px;height:7px;border-radius:50%;background:#fc5b57}.lights i:nth-child(2){background:#fdbc40}.lights i:nth-child(3){background:#33c748}';
define('tree-modern',lightcss+`
:host{font:6px/1 Inter,"Liberation Sans",sans-serif;color:#333;border:1px solid #c9c9c9;border-bottom:0;border-radius:5px 5px 0 0;background:#fff}
.top{background:linear-gradient(#e9e7e9,#d2d0d2);height:47px;border-bottom:1px solid #bbb;--lg:5px}
.tt{display:grid;grid-template-columns:1fr auto 1fr;height:14px;align-items:center;padding-left:4px;font-size:7px}
.tt b{font-weight:400;display:flex;gap:3px;align-items:center}
.tb{display:flex;height:32px}
.tb button{display:flex;flex-direction:column;align-items:center;gap:4px;padding-top:1px;position:relative;color:#555}
.bdg{position:absolute;right:2px;top:-2px;background:#3573b8;color:#fff;border-radius:2px;font-size:5px;padding:1px 2px}
.bd{display:flex;height:271px}
aside{width:100px;background:#ebebeb;border-right:1px solid #ccc;color:#666;flex:none;padding-top:3px}
aside div{height:14px;padding-left:23px;line-height:14px}
aside .h{display:flex;align-items:center;padding-left:6px;gap:5px;height:16px;margin-top:6px;line-height:16px;color:#777}
aside .h:first-child{margin-top:0}
aside .on{background:#1b86fb;color:#fff}
.main{flex:1;min-width:0}
.fl{height:14px;background:#ececec;display:flex;align-items:center;gap:5px;padding:0 2px 0 5px}
select{border:1px solid #c3c3c3;background:#f8f8f8;border-radius:2px;height:10px;padding:0 3px;width:64px}
.w{display:grid}.w>*{grid-area:1/1}.graph{align-self:end}
table{height:256px}tr{height:11px}thead tr{height:13px}
th{border-bottom:1px solid #ddd;border-right:1px solid #e8e8e8}
td:nth-child(n+2),th:nth-child(n+2){padding-left:2px}
.sel{background:#d9d9d9;font-weight:600}
.ref{display:inline-flex;align-items:center;gap:1px;height:9px;padding:0 3px 0 2px;margin-right:3px;vertical-align:middle}
`,`<div class="top"><div class="tt">${lights}<b>${ic('folderf',9,'#6fc7f2')}sourcetree-website (Git)</b></div><div class="tb"><button style="width:33px">${ic('circp',13,'#3573b8')}Commit</button><button style="width:24px;margin-left:22px">${ic('circd',13,'#3573b8')}<span class="bdg">98</span>Pull</button><button style="width:24px">${ic('circu',13,'#3573b8')}Push</button><button style="width:26px;margin-left:25px">${ic('branch',13,'#3573b8')}Branch</button><button style="width:24px">${ic('merge',13,'#3573b8')}Merge</button><button style="width:26px;margin-left:26px;opacity:.5">${ic('shelf',13,'#3573b8')}Shelve</button><span class="grow"></span><button style="width:50px">${ic('finder',13,'#777')}Show in Finder</button><button style="width:34px">${ic('term',13,'#777')}Terminal</button><button style="width:30px;margin-right:3px">${ic('gear',13,'#777')}Settings</button></div></div>
<div class="bd"><aside><div class="h">${ic('screen',12,'#888')}WORKSPACE</div><div>File status</div><div class="on">History</div><div>Search</div>${[['branch','BRANCHES'],['mark','BOOKMARKS'],['tag','TAGS'],['cloud','REMOTES'],['shelf','SHELVED'],['folder','SUBREPOSITORIES']].map(a=>`<div class="h">${ic(a[0],12,'#888',1)}${a[1]}</div>`).join('')}</aside><div class="main"><div class="fl"><select aria-label="Branches"><option>All Branches</option></select><select aria-label="Remote" style="width:96px"><option>Show Remote Branches</option></select><select aria-label="Order" style="width:70px"><option>Ancestor Order</option></select><span class="grow"></span><label for="j">Jump to:</label><select id="j" style="width:59px"></select></div>
<div class="w"><table><colgroup><col style="width:47px"><col style="width:41px"><col style="width:49px"><col><col style="width:68px"></colgroup><thead><tr><th>&nbsp;Graph</th><th>Commit</th><th>Author</th><th>Description</th><th>Date</th></tr></thead><tbody>${mo.map((r,k)=>`<tr class="${k?'':'sel'}"><td></td>${r.map(c=>`<td>${c}</td>`).join('')}</tr>`).join('')}</tbody></table>
${graph(47,242,21,[5,12,18.5,25],[['#c25cc0',[[0,1],[1,1.5],[1,10.6],[0,11]]],['#c59a3c',[[0,6],[2,6.4],[2,10.6],[0,11]]],['#45b98a',[[0,9],[3,9.4],[3,10.6],[1,11],[1,12.6],[0,13]]],['#c25cc0',[[0,18],[1,18.4],[1,19.6],[1,21]]],['#c25cc0',[[0,20],[1,20.5]]],['#4ba3cc',[[0,0],[0,21]],2]],[...[1,5,6,9,11,12,13,14,15,16,17,18,20].map(r=>['#4ba3cc',0,r]),['#4ba3cc',0,0,1],...[2,3,4,19].map(r=>['#c25cc0',1,r]),['#c59a3c',2,7],['#c59a3c',2,8],['#45b98a',3,10]],{r:1.8})}</div></div></div>`);

/* Dark editor graph */
const dr=(c,t,x='')=>`<span class="ref"><i style="background:${c}">${ic('branch',7,'#111',2)}</i>${t}${x}</span>`;
const da=[[dr('#0085d9','upstream/live')+'<s>Merge pull request #1419...</s>','3 Sep 2019 23:27','Maira Wenzel','4e3d355b'],['<u></u>'+dr('#00c90e','ardalis/scaling-scenarios','<em>origin</em>')+'upda...','3 Sep 2019 21:37','Steve Smith','5a6b41cc'],[dr('#d98500','upstream/latex')+'test double escape to se...','3 Sep 2019 20:47','Maira Wenzel','7ad84bf7'],[dr('#a300d9','upstream/mairaw-patch-1')+'update version...','3 Sep 2019 20:27','Maira Wenzel','8691754b'],['Updating scaling chapter','3 Sep 2019 20:04','Steve Smith','55fbc98b'],[dr('#d9008f','upstream/master')+'move article to tutorials...','3 Sep 2019 19:27','Maira Wenzel','36ba6e56'],['turn off feedback for a few areas (#14187)','3 Sep 2019 19:26','Maira Wenzel','7fbe3c8f'],['US 1588733 Add missing language IDs - 09 (...','3 Sep 2019 19:24','Tom Pratt','87c9da37'],['Update errorreport compiler option.md (#14...','3 Sep 2019 19:19','Youssef Victor','57688b47'],['Update bc30456.md (#14186)','3 Sep 2019 19:14','Youssef Victor','7b1732ed'],['"instance method call" --&gt; "static method call...','3 Sep 2019 19:11','Ron Petrusha','343fe0c2'],['Converting +code+ key to code block to avoi...','3 Sep 2019 19:09','Mauricio da los San...','a40afb72'],[dr('#d98500','upstream/broken-links')+'fix broken link','3 Sep 2019 19:04','Maira Wenzel','4bb62aed'],['initial checkin (#14139)','3 Sep 2019 19:04','Terry Kim','506c85db'],['fix broken link','3 Sep 2019 19:02','Maira Wenzel','52cf2fbb'],['fix broken link','3 Sep 2019 19:01','Maira Wenzel','6edf05e1'],[dr('#a300d9','upstream/link-page')+'fix links for not recom...','3 Sep 2019 18:41','Maira Wenzel','5e360025'],['Add platform clarification (#14189)','3 Sep 2019 18:17','Tom Dykstra','43a6d906']];
define('git-graph',`
:host{background:#1e1e1e;color:#d0d0d0;font:7px/1 "Open Sans",sans-serif}
.top{height:43px;border-bottom:2px solid #444;display:flex;padding-left:37px}
.ctl{width:354px;padding-top:4px}
.ctl .row{gap:4px;font-weight:700;height:15px}
.sl{flex:1;display:flex;position:relative}.sl::after{content:"▾";position:absolute;right:4px;top:4px}
select{flex:1;height:15px;border:1px solid #3c3c3c;background:#252525;border-radius:2px;padding:0 6px;font-weight:400}
.cb{justify-content:center;margin-top:4px;padding-left:23px}
.cb input{width:7px;height:7px;background:#eee;color:#111}
.cb input::before{content:"✓";display:block;font-size:7px;line-height:7px}
.ib{margin-left:auto;padding:0 7px 2px 0;gap:8px;color:#aaa}
.w{display:grid}.w>*{grid-area:1/1}.graph{align-self:end}
table{height:275px}tr{height:14px}thead tr{height:18px;border-bottom:2px solid #444}
th{text-align:center;font-weight:700}
.ref{display:inline-flex;align-items:center;gap:3px;height:12px;border:1px solid #555;border-radius:2px;background:#2c2c2c;padding-right:2px;margin-right:4px;vertical-align:middle}
.ref i{width:11px;height:12px;display:grid;place-items:center}
.ref em{font-style:normal;border-left:1px solid #666;padding-left:3px}
s{text-decoration:none;color:#777}
tbody tr:first-child{color:#888}
u{display:inline-block;width:4px;height:6px;border:1px solid #00c90e;border-radius:3px;margin-right:5px;vertical-align:middle}
`,`<div class="top"><div class="ctl"><div class="row"><label for="b">Branches:</label><span class="sl"><select id="b"><option>Show All</option></select></span></div><label class="row cb"><input type="checkbox" checked>Show Remote Branches</label></div><div class="row ib">${ic('search',10)}${ic('gear',10,'#ccc',3)}${ic('cloud',10)}${ic('sync',10)}</div></div>
<div class="w"><table><colgroup><col style="width:146px"><col style="width:166px"><col style="width:68px"><col style="width:79px"><col></colgroup><thead><tr><th>Graph</th><th>Description</th><th>Date</th><th>Author</th><th style="text-align:left;padding-left:4px">Commit</th></tr></thead><tbody>${da.map(r=>`<tr><td></td>${r.map(c=>`<td>${c}</td>`).join('')}</tr>`).join('')}</tbody></table>
${graph(146,257,18,[10.5,20,29.5,39,48.5],[['#0085d9',[[0,0],[0,18]]],['#d9008f',[[0,.3],[1,.8]]],['#00c90e',[[2,1],[2,18]]],['#d98500',[[3,2],[3,4.2],[2,4.5]]],['#a300d9',[[4,3],[4,4.2],[3,4.5],[2,4.5],[1,4.7],[1,5]]],['#d98500',[[3,12],[3,16.2],[2,16.5]]],['#a300d9',[[4,16],[3,16.5],[2,16.5],[1,17]]]],[['#0085d9',0,0],['#00c90e',2,1,1],['#00c90e',2,4],['#d98500',3,2],['#a300d9',4,3],...[5,6,7,8,9,10,11,13,17].map(r=>['#d9008f',1,r]),...[12,14,15].map(r=>['#d98500',3,r]),['#a300d9',4,16]],{r:2,hole:'#1e1e1e',sw:1.3})}</div>`);

/* Dark desktop client */
const kt=[[0,'f','Libgit2','cake'],[1,'b','appveyor'],[1,'d','bindings'],[2,'d','libgit2sharp'],[3,'b','020_2'],[3,'b','022_1'],[1,'d','brianmario'],[2,'b','attr-from-tree'],[2,'b','revwalk-filter'],[2,'b','trailer-info'],[2,'b','trailer-list'],[1,'d','bug'],[2,'b','status_case'],[1,'b','clay-test'],[1,'d','cmn'],[2,'b','atexit-skeleton'],[2,'b','auth-retry'],[2,'b','bump-pretend-git'],[2,'b','cancellation'],[2,'b','commit-on'],[2,'b','commit-to-memory'],[2,'b','commit-with-signature']];
const T='#15a0bf',PU='#8516a9',BL='#1965d2',MA='#b71da8',CR='#d80c65',RE='#a80e10',GR='#5fb02e',TE='#1fa583';
const km=[['Merge pull req...','12 hours ago',T,0],['generated docs','',PU,2],['openssl: remove leftover #if...','',BL,1],['Merge pull request #4640 fr...','',T,0],['Merge pull reque...','4 days ago',T,0],['worktree: add fu...','5 days ago',MA,3],['tests: fix issue with /tmp pat...','',MA,3],['Merge pull reque...','6 days ago',T,0],['Merge pull request #4525 fr...','',T,0],['Merge pull request #4580 fr...','',T,0],['Merge pull requ...','a week ago',T,0],['Merge pull request #4635 fr...','',T,0],['Merge pull request #4577 fr...','',T,0],['tests: free the worktree in a...','',GR,8],['refspec: check for valid para...','',GR,8],['remote: repo is optional here','',TE,8],['worktree: fix calloc of the w...','',TE,8],['local: fix a leaking reference...','',TE,8],['Fix deletion of unrelated br...','',CR,4],['Merge pull request #4631 fr...','',T,0],['fixed stack smashing due to...','',BL,8],['index: commit the changes ...','',PU,8],['index: test dirty index bit','',PU,8],['index: add a dirty bit reflecti...','',PU,8],['stash: use _an_ index not _t...','',PU,8],['checkout: always set the ind...','',PU,8]];
const kc=[107.7,119.3,131.3,143.3,155.3,167.7,180.3,192.7,204,213,6];
const ky=r=>(r+.5)*399/26;
const kTint=km.map((m,r)=>`<rect x="${kc[m[3]]}" y="${(ky(r)-6.5).toFixed(1)}" width="${(213-kc[m[3]]).toFixed(1)}" height="13" fill="${m[2]}" opacity=".16"/><rect x="213" y="${(ky(r)-6.5).toFixed(1)}" width="2" height="13" fill="${m[2]}"/>`).join('');
const kFace=km.map((m,r)=>{if(!m[3])return'';const x=kc[m[3]],y=ky(r).toFixed(1),g=r==5||r==6||r==18;return `<circle cx="${x}" cy="${y}" r="5.500" fill="${g?(r==18?'#3a2228':'#3a2f9a'):'#4a4a48'}" stroke="${m[2]}" stroke-width="1.500"/><ellipse cx="${x}" cy="${y}" rx="2.500" ry="3" fill="${g?'#a8e08a':'#a39c8c'}"/>`}).join('');
const elbow=(k,r,c,w)=>{const x=kc[k],y=ky(r);return `<path d="M${kc[0]} ${y.toFixed(1)}H${x-4}q4 0 4 4V399" stroke="${c}" stroke-width="${w||1.4}"/>`};
define('kraken-client',`
:host{background:#1c1e23;color:#d4d6da;font:7px/1 "Open Sans",sans-serif;border:1px solid #6a6d75}
.bar{height:24px;background:#2f333d;display:flex;align-items:center;padding-right:5px}
.bc{display:flex;height:24px;align-items:center;font-size:8px}
.bc span{height:24px;display:flex;align-items:center;gap:8px;padding:0 8px 0 20px;background:#3b404c;clip-path:polygon(0 0,calc(100% - 7px) 0,100% 50%,calc(100% - 7px) 100%,0 100%,7px 50%)}
.bc span:first-child{clip-path:none;background:none;padding:0 6px 0 4px}
.tl{display:flex;flex-direction:column;align-items:center;gap:2px;width:26px;font-size:6px;color:#a5a8ae}
.glo{background:#10d5d0;color:#044;font-size:5px;padding:1px 4px;border-radius:1px}
.bd{display:flex;height:399px}
aside{width:156px;background:#22262d;flex:none}
aside .row{padding:0 5px 0 2px}
.band{background:#30343e;height:15px;gap:3px;margin-right:5px}
.band em,.vw em{font-style:normal;color:#7f9bdc}
.vw{height:16px;justify-content:space-between}
.fi{height:13px}.fi input{flex:1;font-size:6px}
.fi input::placeholder{color:#8a8d93;opacity:1}
.tr{display:grid;grid-auto-rows:1fr;height:291px}
.tr li,.lc li{display:flex;align-items:center;gap:3px}
.lc li{height:13px}
.on{background:#386b38;margin-right:5px}
.mid{width:325px;display:grid;grid-template-columns:215px 1fr;flex:none}
.gr{display:grid}.gr>*{grid-area:1/1}
.lb,.ms{display:grid;grid-auto-rows:1fr;height:399px}
.lb li{display:flex;align-items:center;padding-left:5px}
.lb span{display:flex;align-items:center;gap:3px;height:11px;padding:0 3px;background:#14424b;color:#b5c8cc;z-index:1}
.ms{font-size:6px}
.ms li{display:flex;align-items:center;padding:0 6px 0 4px;justify-content:space-between;white-space:nowrap;margin-right:6px}
.ms li span+span{color:#aaa}
.ms .sel{background:#223a70}
.rt{flex:1;background:#2b2f38;min-width:0}
.rh{height:13px;background:#3a3e49;justify-content:center;padding-right:4px}
.box{margin:5px 5px 0 4px;background:#3b404c;border:1px solid #4a4e59;height:56px;padding:6px 6px 0 5px}
.box h3{font-size:8px;line-height:12px;white-space:nowrap}.box p{font-size:6px;line-height:9px;color:#a9acb4;margin-top:4px;white-space:nowrap}
.au{margin:5px 4px 0 5px;gap:5px;align-items:flex-start;line-height:11px;height:34px}
.tg{height:20px;padding:0 7px 0 10px;justify-content:space-between}
.tg button{height:13px;padding:0 8px;display:inline-flex;align-items:center;gap:3px}.tg .p{background:#33457a;color:#fff}
.tg input{width:7px;height:7px;background:#fff;border-radius:1px}
.tg label{font-size:6px;gap:2px}
.fs{background:#22262d;margin:0 5px 0 6px;height:239px;padding:0 5px}
.fs li{height:19px;display:flex;align-items:center;gap:5px}
.ft{height:13px;background:#2f333d;justify-content:flex-end;gap:7px;padding-right:6px;font-size:6px}
.ft b{background:#e2542c;color:#fff;padding:1px 4px;font-weight:400}
.ft button{border:1px solid #4a6ac0;padding:1px 3px;background:#2a3a66}
.caret{width:16px;text-align:center;font-size:6px}
`,`<div class="bar"><div class="bc"><span>${ic('folder',12,'#fff',2)}</span><span>libgit2 <small>▾</small></span><span>index_dirty <small>▾</small></span></div><span class="grow"></span><button class="tl">${ic('undo',11,'#eee')}Undo</button><button class="tl">${ic('redo',11,'#eee')}Redo</button><button class="tl">${ic('down',11,'#eee')}Pull</button><span style="width:9px;font-size:6px">▾</span><button class="tl">${ic('up',11,'#eee')}Push</button><button class="tl">${ic('branch',11,'#eee',2)}Branch</button><button class="tl">${ic('stash',11,'#eee')}Stash</button><button class="tl">${ic('stash',11,'#eee')}Pop</button><button class="tl" style="width:34px"><b style="font-size:8px;color:#9ff">Glo</b><span class="glo">New</span></button><span style="width:149px"></span><div class="row" style="gap:5px">${ic('search',10,'#fff',2)}${av(16,16,'#d8d0cc','#d9a988','#222','#c22')}<small>▾</small>${ic('menu',6,'#ccc')}</div></div>
<div class="bd"><aside><div class="row vw">${ic('clock',7,'#eee',3)}<span>Viewing <em>466/466</em></span><span>Show All</span></div><div class="row fi"><input placeholder="Filter (⌘ + Option + f)" aria-label="Filter">${ic('search',8,'#ccc')}</div><div class="row band" style="margin-top:4px">${ic('laptop',6)}<span class="grow">LOCAL</span><em>2/2</em></div><ul class="lc"><li style="padding-left:13px">${ic('folder',8)}ethomson</li><li class="on"><span style="color:#5fd35f;font-size:8px">☑</span><span style="width:8px"></span>${ic('tri',6)}index_dirty</li><li style="padding-left:13px">${ic('tri',6)}<span class="grow">master</span><span style="margin-right:17px;font-size:5px">10✓</span></li></ul><div class="row band">${ic('cloudf',6,'#888')}<span class="grow">REMOTE</span><em>406/406</em></div><ul class="tr">${kt.map(a=>`<li style="padding-left:${12+a[0]*8+(a[1]=='b'?2:0)}px">${a[3]?ic('cake',8):ic(a[1]=='d'?'folder':'tri',a[1]=='d'?8:6,'#9a9da3')}${a[2]}</li>`).join('')}</ul></aside>
<div class="mid"><div class="gr"><ul class="lb">${km.map((m,r)=>`<li>${r==0?`<span>master ${ic('tri',5)}${ic('tri',5)}${ic('cake',7)}${ic('cake',7)}</span>`:r==1?`<span style="background:#43184f">gh-pages ${ic('cake',7)}${ic('cake',7)}</span>`:r==7?`<span>master ${ic('laptop',7)}</span>`:r==21?`<span style="background:#7a1c9c;color:#fff">✓ ethom... ${ic('tri',5)}${ic('cake',7)}${ic('cake',7)}${ic('laptop',7)}</span>`:''}</li>`).join('')}</ul>
${graph(215,399,26,kc,[[T,[[0,0],[0,26]]],[PU,[[2,1],[2,26]]],[GR,[[0,10],[8,10]]],[TE,[[0,11],[8,11]]],[T,[[0,12],[8,12]]],[BL,[[0,19],[8,19]]]],[0,3,4,7,8,9,10,11,12,19].map(r=>[T,0,r]),{under:kTint+elbow(1,0,BL)+elbow(3,3,MA)+elbow(4,4,CR)+elbow(5,7,RE,2.4)+elbow(6,8,'#d8662e')+elbow(7,9,'#e8c42c')+`<path d="M84 ${ky(21).toFixed(1)}H204" stroke="${PU}"/>`,over:kFace})}</div>
<ol class="ms">${km.map((m,r)=>`<li class="${r==21?'sel':''}"><span>${m[0]}</span><span>${m[1]}</span></li>`).join('')}</ol></div>
<div class="rt"><div class="row rh">commit: 934486</div><div class="box"><h3>index: commit the changes to the index<br>properly</h3><p>Now that the index has a "dirty" state, where it has changes th<br>at have</p></div><div class="row au">${av(21,22,'#6f9a55','#d9b090','#8a6a50','#3d6a9a')}<div class="grow"><span style="font-size:8px">Edward Thomson</span><br><span style="font-size:6px">authored 11/16/2017 @ 5:19 PM</span></div><span style="font-size:6px">parent: <b>51c2aa</b></span></div><div class="row" style="padding-left:7px;gap:3px;height:10px;font-size:6px">${ic('mod',9,'#d49a3c')}10 modified</div><div class="row tg"><span>Name ↓↑</span><div><button class="p">${ic('lines',7)}Path</button><button>${ic('lines',7)}Tree</button></div><label class="row"><input type="checkbox">View all files</label></div><ul class="fs">${['src/checkout.c','src/index.c','src/index.h','src/status.c','tests/checkout/tree.c','tests/checkout/typechange.c','tests/cherrypick/workdir.c','tests/index/names.c','tests/index/reuc.c','tests/rebase/submodule.c'].map(f=>`<li>${ic('mod',9,'#d49a3c')}${f}</li>`).join('')}</ul></div></div>
<div class="row ft">${ic('search',6,'#888')}<span>100%</span><button>Feedback</button>${ic('circu',7,'#2a8')}<b>PRO</b></div>`);

/* Web commit graph */
const key=(t,g)=>`<a class="key${g?' g':''}" href="#">${t}</a>`;
const fe=[['Added tag DF20110530-2 for changeset e315533a2372'],[key('FECRU-1010')+' : make isUserInGroup call the cache first',0,'#7a1030'],['Creating branch for '+key('FECRU-1010'),0,'#7a1030'],[key('FECRU-441')+' : Animate the accordion on IE9',0,'#b59a70'],[key('FECRU-718',1)+' : fix build after merge from default',1,'#3d6a48'],[key('FECRU-718',1)+' : merge default to branch',1,'#3d6a48'],['None: Bump version number to RC1 <span class="tag">⬙ DF20110530-2</span>'],['None: Merge 2.6-FECRU-365-docs-changes to 2.6 to'],['None: Merge 2.6-FECRU-365-docs-changes to 2.6'],['None: Merge 2.6-FECRU-909'],['None: Merge 2.6-FECRU-909'],[key('CRUC-4771')+' : Fix autocomplete dropdown location on',0,'#b59a70'],['None: Merge 2.6-FE-3043-source-columns to 2.6 to',1],['None: Merge 2.6-FE-3043-source-columns to 2.6'],['None: Merge 2.6-FECRU-998-autocomplete-enter to',1],['None: Merge 2.6-FECRU-998-autocomplete-enter to'],['None: Merge 2.5 to 2.6 to default Pickup security fix for',1],['None: Rearrange merged code so disposer wraps the']];
const gy='#d0d0d0',lb='#6f93cf',mr='#660033',nb='#003399';
define('commit-graph',`
:host{font:8px/1 "Liberation Sans",Arial,sans-serif;color:#222;background:#fff}
.tabs{height:16px;background:#f6f6f6;display:flex;padding-left:8px;gap:22px;color:#36597f;border-bottom:1px solid #ccc;line-height:19px}
.tabs .on{background:#eee;color:#333;border:1px solid #ccc;border-bottom:0;margin:2px -10px 0 -12px;padding:0 6px;line-height:16px}
.hl{height:24px;background:#eee;border-bottom:1px solid #d5d5d5;padding:0 5px 0 3px;gap:1px}
.sl{display:flex;position:relative}.sl::after{content:"▾";position:absolute;right:1px;top:1px;width:10px;height:12px;background:#ddd;line-height:12px;text-align:center}
.hl select{width:114px;height:14px;border:1px solid #aaa;background:#fff;padding:0 2px}
.hl input{width:121px;height:15px;border:1px solid #ccc;background:#fff;padding:0 3px}
.hl input::placeholder{color:#aaa;opacity:1}
.hd{height:23px;background:#efefef;border-bottom:1px solid #ccc;display:grid;grid-template-columns:150px 28px 28px 28px 43px auto;column-gap:2px;padding:2px 0 0 2px;text-align:center;color:#fff;white-space:nowrap}
.hd span{height:20px;line-height:15px;border-radius:2px 2px 0 0;overflow:hidden;border-bottom:5px solid #555}
.hd .l{text-align:left;padding-left:1px}
.hd button{justify-self:start;margin:2px 0 0 6px;background:#fff;color:#222;border-radius:2px;padding:0 7px;height:14px;box-shadow:0 0 2px #bbb}
.bd{height:270px;overflow:hidden;display:flex}
.w{display:grid;flex:1}.w>*{grid-area:1/1}
ol{display:grid;grid-auto-rows:1fr;height:274px;background:linear-gradient(90deg,#efefef 152px,#fff 152px 155px,#efefef 155px 182px,#fff 182px 185px,#efefef 185px 212px,#fff 212px 215px,#efefef 215px 243px,#fff 243px 245px,#efefef 245px 289px,#fff 289px)}
li{display:flex;align-items:center;padding-left:297px;white-space:nowrap;overflow:hidden}
li time{width:47px}li svg{margin-right:5px}
.dim{color:#aaa}.sel{background:#e6eefb}
.key{background:#d5e3f3;color:#2a5a8f;border-radius:2px;padding:2px;display:inline-block;margin-right:2px}.key.g{background:#ddd;color:#666}
.tag{border:1px solid #ccc;border-radius:2px;padding:1px 2px;margin-left:3px;color:#555}
.sb{width:9px;background:#f1f1f1;padding-top:12px}.sb i{display:block;height:37px;background:#d8d8d8;border:1px solid #aaa}
.inf{margin-left:auto;margin-right:9px;color:#999;display:flex;gap:4px;align-items:center}
.inf b{background:#0b3a73;color:#fff;border-radius:5px;width:9px;height:10px;text-align:center;line-height:10px}
`,`<nav class="tabs"><a href="#">Activity</a><a class="on" href="#">Commit Graph</a><a href="#">Files</a><a href="#">Users</a><a href="#">Reports</a><a href="#">Search</a></nav><div class="row hl"><label for="h">Highlight:</label><span class="sl"><select id="h"><option>Lineage</option></select></span><label for="g" style="margin-left:21px">Go to:</label><input id="g" placeholder="Enter changeset ID or tag"><span class="grow"></span><span style="color:#bbb">⊂⊃</span></div>
<div class="hd"><span style="background:${mr}">default</span><span class="l" style="background:#330066">2.6-FEC</span><span class="l" style="background:#993300">2.6.1-FE</span><span class="l" style="background:${nb}">20pc-FE</span><span style="background:${nb}">2.6</span><button>select branches...</button></div>
<div class="bd"><div class="w"><ol>${fe.map((r,k)=>`<li class="${r[1]?'dim':''}${k==10?'sel':''}"><time>30 May 11</time>${av(9,10,r[2]||'#eee',r[2]?'#d9a988':'#999',r[2]?'#221':'#777',r[2]?'#433':'#888')}<span>${r[0]}</span>${k==10?'<span class="inf"><b>i</b>⚙▾</span>':''}</li>`).join('')}</ol>
${graph(290,274,18,[8.5,161,191.5,221.5,252,244.5,16],[[mr,[[0,0],[0,9]],1],[gy,[[3,4],[3,18]],1],[gy,[[3,5],[3,5.5],[6,5.5],[6,18]],1],['#330066',[[1,1],[1,2]],1],[lb,[[1,2],[1,2.5],[5,2.5],[5,5.7],[4,6]],1],[lb,[[2,3],[2,3.5],[5,3.5]],1],[lb,[[4,6],[4,18]],1],[lb,[[0,7],[0,7.5],[4,7.5],[4,8]],1],[lb,[[0,9],[0,9.5],[4,9.5],[4,10]],1],[gy,[[0,12],[0,18]],1],...[12,14,16].map(r=>[gy,[[0,r],[0,r+.5],[4,r+.5],[4,r+1]],1])],[...[0,7,9].map(r=>[mr,0,r]),['#330066',1,1],['#330066',1,2],['#993300',2,3],[gy,3,4],[gy,3,5],...[12,14,16].map(r=>[gy,0,r]),...[6,8,11,13,15,17].map(r=>[nb,4,r])],{r:3.4,over:`<ellipse cx="252" cy="${(10.5*274/18).toFixed(1)}" rx="4" ry="4.500" fill="#fff" stroke="#000" stroke-width="2"/>`})}</div><div class="sb"><i></i></div></div>`);

/* Light mac client */
const tw=[['George Clagh...','03.05.18','0dc30dab','Assert correct...','#fff'],['Ryuta Kamizono','03.05.18','4a786c0f','Merge pull re...','#5a4436'],['printercu','03.05.18','2d50374b','Use usual met...','#333'],['Ryuta Kamizono','03.05.18','11549e81','Partly revert "...','#5a4436'],['yuuji.yaginuma','03.05.18','1087191f','Add support t...','#3f9a4a'],['George Claghorn','03.05.18','647342c2','Stream blobs fr...','#fff'],['Arun Agrawal','02.05.18','fc888952','Merge pull requ...','#b9a898'],['Yoshiyuki Hirano','02.05.18','f3c71ff1','Use https with...','#e8e0d8'],['Rafael França','02.05.18','e9f434d3','Merge pull requ...','#566'],['George Claghorn','02.05.18','bf5f41d9','Support streami...','#fff'],['Yasuo Honda','02.05.18','a1900a61','Remove un...','#789']];
define('tower-client',lightcss+`
:host{font:7px/1 Inter,"Liberation Sans",sans-serif;color:#555;background:#fff;--lg:4px}
.t1{background:#e9e6e9;height:12px;display:grid;grid-template-columns:1fr auto 1fr;align-items:center;padding-left:4px}
.t1 b{font-weight:400;display:flex;gap:3px}
.t2{background:linear-gradient(#e9e6e9,#dcd9dc);height:16px;padding:0 18px 0 5px}
.g{display:flex;background:#fafafa;border-radius:2px;height:12px}
.g button{width:17px;display:grid;place-items:center;color:#888}
.t2 input{width:178px;height:12px;background:#fff;border-radius:2px;text-align:center}
.t3{background:#d4d1d4;height:16px;border-bottom:1px solid #bbb;gap:5px;padding:0 4px 0 8px;font-size:6px}
.bd{display:flex;height:286px}
aside{width:106px;background:#f3f3f3;border-right:1px solid #ccc;padding:3px 0 0 11px;flex:none;overflow:hidden;display:flex;flex-direction:column}
aside small{font-size:6px;height:9px;line-height:9px;margin:3px 0 0 -5px;color:#888;flex:none}
aside div{height:13px;display:flex;align-items:center;gap:5px;flex:none;white-space:nowrap}
aside .b{padding-left:9px}
aside .sel{background:#ccc;margin-left:-11px;padding-left:11px}
.pl{background:#444;color:#fff;border-radius:5px;font-size:6px;padding:2px 3px}
aside .ft{position:absolute;left:0;bottom:0;width:105px;height:15px;background:#f6f6f6;border-top:1px solid #ddd;padding-left:5px;gap:8px}
.ls{width:169px;border-right:1px solid #ccc;flex:none}
.lh{position:relative;z-index:1;height:21px;border-bottom:1px solid #ccc;padding:0 5px 0 11px;gap:4px;background:#fafafa}
.w{display:grid;margin-top:-4px}.w>*{grid-area:1/1}
ol{display:grid;grid-auto-rows:1fr;height:277px;padding-left:29px}
ol li{display:flex;align-items:center;gap:5px;border-bottom:1px solid #eee;margin-right:7px;padding-right:15px;font-size:6px;line-height:10px}
ol li p{display:flex;justify-content:space-between;white-space:nowrap;overflow:hidden}
ol li code{font:6px/10px "Liberation Mono",monospace;color:#888}ol li b{color:#222;font-weight:500}
ol li span{color:#999}
.dt{flex:1;min-width:0}
.dh{height:21px;background:#f3f3f3;border-bottom:1px solid #ddd;padding:0 11px;justify-content:space-between}
.sg{display:flex;height:12px;background:#fff;line-height:12px;font-size:6px}.sg button{padding:0 8px}.sg .on{background:#777;color:#fff}
.au{height:29px;padding:5px 8px 0 9px;display:flex;font-size:6px;line-height:11px}
.au label{width:38px;color:#aaa;text-align:right;margin-right:4px;white-space:nowrap}
.rb{display:flex;justify-content:center}
.rb div{display:flex;border:1px solid #ccc;border-radius:5px;font-size:5px;color:#bbb;height:12px}.rb button{padding:0 6px}.rb button+button{border-left:1px solid #ddd}
.msg{font:7px/11px "Liberation Sans",sans-serif;color:#222;padding:8px 11px 0;white-space:nowrap}
.ex{display:flex;justify-content:space-between;padding:0 19px 0 12px;height:24px;align-items:center;color:#aaa;font:6px/1 Roboto}
.fl{height:17px;border-top:1px solid #e5e5e5;padding:0 10px 0 11px;gap:5px;font:5px/1 Inter;color:#999;white-space:nowrap}
.fl i{font-style:normal;color:#2bb8e8;font-size:6px}.fl u{background:#2bc0f0;color:#fff;text-decoration:none;padding:2px}
pre{margin:0;font:6px/10px "Liberation Mono",monospace;color:#666}
.cd{border-top:1px solid #ddd;display:grid;grid-template-columns:20px 22px 1fr;height:77px;text-align:center}
.cd pre{border-right:1px solid #ccc}.cd pre:last-child{text-align:left;border:0;padding-left:3px}
.del{background:#fde5e5;display:block}
`,`<div class="t1">${lights}<b>${ic('folderf',8,'#53c3ee')}rails – master, origin/master (68063 Commits)</b></div>
<div class="row t2"><span class="g"><button aria-label="Back">‹</button><button aria-label="Next">›</button></span><span class="g" style="margin-left:33px"><button aria-label="Terminal">${ic('term',8)}</button></span><span class="g" style="margin-left:5px"><button aria-label="Tools">${ic('wand',9)}</button></span><span class="g" style="margin-left:34px"><button aria-label="Fetch" style="width:22px">${ic('ar1',8)}</button><button aria-label="Pull" style="width:22px">${ic('ar1',8,'#555',3)}</button><button aria-label="Push" style="width:20px">${ic('ar2',8)}</button></span><span class="g" style="margin-left:34px;opacity:.6"><button style="width:36px" aria-label="Stash">${ic('list',8)}</button><button style="width:36px" aria-label="Apply">${ic('list',8)}</button></span><span class="grow"></span><span class="g"><button aria-label="Reload">${ic('sync',8)}</button></span><input style="margin-left:5px" placeholder="Search for Message" aria-label="Search for Message"></div>
<div class="row t3">${ic('cloud',9)}<span style="color:#999">|</span>${ic('bag',8,'#888')}Repositories ›${ic('folder',8)}rails (master) ›${ic('clock',8)}<b>History</b>&nbsp;› master<span class="grow"></span>${ic('cloud',8)}Clone</div>
<div class="bd"><aside><small style="margin-top:0">Workspace</small><div style="margin-top:2px">${ic('folder',10,'#777',1)}Working Copy</div><div>${ic('clock',10,'#777',1)}History</div><div>${ic('list',10,'#777',1)}Stashes</div><div>${ic('merge',10,'#777',1)}Pull Requests</div><div>${ic('gear',10,'#777',1)}Settings</div><small style="margin-top:5px">Branches</small><div class="sel">${ic('branch',9)}mas...<span class="pl">HEAD ↗18</span></div><div>${ic('branch',9)}development</div><small style="margin-top:4px">Tags</small><small style="margin-top:5px">Remotes</small><div style="margin:1px 0 0 -8px">${ic('trid',5,'#888')}${ic('folder',9)}origin</div>${['master','1-2-stable','2-0-stable','2-1-stable','2-2-stable','2-3-stable','3-0-stable','3-1-stable'].map(t=>`<div class="b">${ic('branch',9)}${t}</div>`).join('')}<div class="ft">+⌄ ${ic('list',7)}${ic('clock',7)}${ic('gear',7)}⌄</div></aside>
<div class="ls"><div class="row lh">${ic('branch',9)}<b style="font-weight:600;color:#222">master</b> <span>› origin/master</span><span class="grow"></span>${ic('lines',8)}⌄</div><div class="w"><ol>${tw.map(r=>`<li>${av(18,19,r[4],r[4]=='#3f9a4a'?'#3fb84a':'#d9a988','#2c2320','#778')}<div class="grow"><p><span>${r[0]}</span><span>${r[1]}</span></p><p><code>${r[2]}</code><b>${r[3]}</b></p></div></li>`).join('')}</ol>
${graph(29,277,11,[4.4,9.5,15,20.4,26.6],[['#2fb5e0',[[0,0],[0,11]]],['#4fc5ea',[[1,0],[1,11]]],['#f0cf60',[[2,0],[2,4.5],[0,5]]],['#f3b073',[[3,0],[3,4.8],[2,5.2],[2,11]]],['#ee82dd',[[0,1.2],[4,1.4],[4,3.6],[0,3.8]],1],['#bbb',[[0,6.2],[3,6.4],[3,7.6],[0,7.9]],1],['#2fb5e0',[[0,8.2],[3,8.5],[3,11]],1]],[...[1,3,4,5,6,8,9].map(r=>['#777',0,r,1]),['#777',4,2,1],['#777',3,7,1],['#777',3,10,1]],{r:2.2,sw:1.5})}</div></div>
<div class="dt"><div class="row dh"><span>66288b9e</span><span class="sg"><button class="on">Changeset</button><button>Tree</button></span></div><div class="au"><div class="grow"><div class="row"><label>Author</label>Jolyon Pawlyn &lt;jpawlyn@gmail.com&gt;</div><div class="row"><label>Author Date</label>1. May 2018 at 19:05:52 CEST</div></div>${av(17,17,'#ddd','#888','#333','#555')}&nbsp;▾</div><div class="rb"><div><button>ROLLBACK</button><button>REVERT</button><button>DIFFTOOL</button></div></div>
<p class="msg">Allow a belonging to object to be created from a new record<br>If a 'has one' object is created from a new record, an<br>ActiveRecord::RecordNotSaved error is raised but this behavior was also<br>applied to the reverse scenario.</p><div class="ex"><span>Expand All</span><span>Showing 3 changed files with 17 additions and 4 deletions</span></div><div class="row fl">▸<i>&nbsp;modified</i><u>M</u>activerecord/lib/active_record/a...ociations/has_one_association.rb</div><div class="row fl">▾<i>&nbsp;modified</i><u>M</u>activerecord/lib/active_record/a...ociations/singular_association.rb</div><pre style="border-top:1px solid #e5e5e5;height:21px;line-height:21px;padding-left:21px">1 chunk, 0 insertions, 4 deletions</pre><pre style="border-top:1px solid #e5e5e5;height:20px;line-height:20px;padding-left:21px">@@ -63,10 +63,6 @@ def set_new_record(record)</pre><div class="cd"><pre>63
64

65
-66

-67
-68</pre><pre>63
64

65</pre><pre>        end

        def _create_record(attributes, raise_error =
false)
<span class="del">          unless owner.persisted?
            raise ActiveRecord::RecordNotSaved, "You
cannot call create unless the parent is saved"
          end</span></pre></div></div></div>`);

/* Hosted desktop client */
define('hub-client',lightcss+`
:host{font:6px/1 Inter,"Liberation Sans",sans-serif;color:#444;background:#fff;border:1px solid #bbb;--lg:4px}
.t1{background:#e6e3e6;height:13px;display:grid;grid-template-columns:1fr auto 1fr;align-items:center;padding-left:4px}
.t1 b{font-weight:400;display:flex;gap:3px;font-size:7px}
.t2{background:linear-gradient(#e3e0e3,#cecbce);height:21px;padding:0 6px;border-bottom:1px solid #aaa}
.t2 button{background:#fbfbfb;border-radius:2px;height:12px;padding:0 5px;display:flex;gap:3px;align-items:center}
.bd{display:flex;height:136px}
aside{width:85px;background:#f2f2f2;border-right:1px solid #ccc;padding-top:7px;flex:none}
aside input{width:72px;height:12px;border:1px solid #ccc;border-radius:6px;margin-left:6px;padding:0 4px}
aside small{display:block;margin:13px 0 2px 5px;font-size:6px}
aside div{height:15px;display:flex;align-items:center;gap:3px;padding-left:10px;font-size:7px;white-space:nowrap}
aside .sel{background:#ccc}
.dk{background:#333;height:58px;padding:7px 6px 0 8px;color:#999}
.dk .row{gap:5px}
.dk button{background:#555;color:#ddd;height:13px;padding:0 5px;border-radius:1px}
.dk p{text-align:right;line-height:12px;width:76px;margin-right:6px;white-space:nowrap}
.ct{display:flex}
.ct ol{width:173px}
.ct ol li{display:flex;gap:5px;padding:6px 7px 0;height:29px;line-height:9px;border-bottom:1px solid #f2f2f2;white-space:nowrap}
.ct ol p{color:#222;font-size:7px}.ct small{color:#aaa;font-size:6px}
.de{flex:1;border-left:1px solid #eee;padding:6px 0 0 7px}
.de h3{font-size:8px;line-height:11px;color:#222}
.fr{background:#f6f6f6;margin:5px 0 0 -7px;padding:0 8px;height:20px;justify-content:space-between}
`,`<div class="t1">${lights}<b>${ic('folderf',8,'#6cc4ef')}atom/find-and-replace</b></div><div class="row t2"><button>${ic('plus',7)}▾</button><button style="margin-left:40px">${ic('side',9)}</button><button style="margin-left:6px">${ic('fork',7)}</button><button style="margin-left:2px">muan/sort-search-results ▾</button><button style="margin-left:18px;border-radius:0;font-size:7px">No Uncommitted Changes</button><button style="background:#666;color:#fff;border-radius:0;font-size:7px">History</button><span class="grow"></span><button>${ic('merge',8)}Pull Request</button></div>
<div class="bd"><aside><input placeholder="Filter Repositories" aria-label="Filter Repositories"><small>GitHub</small>${['atom','docs','electron','electron.atom.io','find-and-replace','markdown-pre...'].map((t,k)=>`<div class="${k==4?'sel':''}">${ic('repo',9,'#777',1.6)}${t}</div>`).join('')}</aside>
<div class="grow"><div class="dk"><div class="row"><button>Update from master</button><button>View Branch</button><span class="grow"></span><button>⟳ Sync</button></div><div style="display:flex;margin-top:6px"><div><p>master ▾</p><p>muan/sort ...ch results</p></div><svg width="386" height="26" fill="none" stroke="#999" aria-hidden="true"><path d="M0 6h274" stroke="#888" stroke-width="3"/><path d="M274 6h95M279 2v8M294 2v8M309 4v4M322 4v4M333 2v8M346 2v8M358 4v4"/><path d="M165 6l9 12h194M179 16v4M191 16v4M203 16v4M229 16v4M241 16v4M254 16v4M267 16v4"/><circle cx="216" cy="18" r="3.500" fill="#3a9ae0" stroke="none"/><circle cx="374" cy="18" r="5" fill="#333" stroke-width="1.500"/></svg></div></div>
<div class="ct"><ol><li>${av(18,19,'#444','#bbb','#111','#222',2)}<div><p>Use a loop</p><small>9 hours ago by benogle</small></div></li><li>${av(18,19,'#999','#e8d0c0','#322','#334',2)}<div><p>💄 Use .localeCompare instead of a fre...</p><small>9 hours ago by muan</small></div></li><li>${av(18,19,'#999','#e8d0c0','#322','#334',2)}<div><p>Default out of range so results won't all...</p><small>9 hours ago by muan</small></div></li></ol><div class="de"><h3>Prevent rendering elements indefinitely</h3><p style="font-size:5px;line-height:7px;margin-top:2px">By making a mark when screen is filled with results and<br>only add more results to above the fold if the insertPoint<br>is above the fold.</p><div class="row" style="gap:3px;margin-top:3px">${av(8,10,'#999','#e8d0c0','#322','#334',2)}muan&nbsp; -o- f8645fbs&nbsp; ${ic('clock',8)}9 hours ago&nbsp; ${ic('gear',7)}▾</div><div class="row fr"><span>lib/project/results-view.coffee</span><span style="color:#6cc644">▪▪▪▪</span></div></div></div></div></div>`);

/* Windows client */
const wr=(c,t,w)=>`<span class="ref" style="width:${w}px"><i style="background:${c}">${ic('branch',9,'#fff')}</i>${t}</span>`;
const B='#3b78b5',R='#ee5a78',G='#5fae48',Y='#f3bd3e',V='#6b4a8c';
const wi=[[wr(B,'br1',42)+'<b>f1 on br1</b>','15:42','05b137d'],[wr(R,'origin/br2',69)+wr(R,'br2',44)+'and again f1','15:37','7db8d08'],[wr(G,'origin/master',83)+wr(G,'master',58)+'merged br3','15:27','d788298'],[wr(Y,'origin/br3',69)+wr(Y,'br3',44)+'merged upstream br2','15:22','508ecdf'],['f1','15:20','a112b10'],['f1','15:26','3f6fa43'],['Merge branch \'master\' of ../play-branches-remote','15:23','063b468'],['file1','14:52','e1acfc3'],['merged br3','15:15','abb199c'],['merged br1','15:14','418a254'],['f1','15:13','a23b50e'],['Merge branch \'br2\'','15:15','a8ea578'],['f1','15:12','49c9500'],['Merge branch \'br1\'','15:14','2dcddb6'],['f1','15:11','e1b04fb'],['f1','15:11','2c256cf'],['Initial empty commit','14:52','d8d2c16']];
define('tree-windows',`
:host{font:8px/1 "DejaVu Sans Condensed","DejaVu Sans",sans-serif;color:#3a3a3a;background:#fff;border:1px solid #ddd;border-right:2px solid #b5bfcc;border-bottom:0}
.bar{height:23px;background:#d4d0c8;padding:0 2px;gap:11px}
select{height:16px;background:#fff;border:1px solid #555;padding:0 2px;width:68px}
.sl{display:flex;position:relative}.sl::after{content:"▾";position:absolute;right:1px;top:1px;width:11px;height:14px;background:#d4d0c8;border:1px solid #888;line-height:12px;text-align:center}
.cb{gap:4px}.cb input{width:9px;height:9px;background:#fff;border:1px solid #555}
.cb input:checked::before{content:"✓";font-size:8px;line-height:7px;display:block;font-weight:700}
.jt{height:18px;border:1px solid #777;padding:0 2px;margin-left:auto}
.w{display:grid}.w>*{grid-area:1/1}.graph{align-self:end}
table{height:282px}tr{height:15px}thead tr{height:15px}
th{text-align:center;color:#5d6d85;border-right:1px solid #ddd;border-bottom:1px solid #eee}
td{padding-left:5px}
.ref{display:inline-flex;align-items:center;gap:2px;height:13px;background:#f3f3f3;border:1px solid #ddd;border-radius:2px;margin-right:3px;vertical-align:middle}
.ref i{width:14px;height:13px;display:grid;place-items:center;border-radius:2px}
.sel{background:#0a246a;color:#dfe5f5}
`,`<div class="row bar"><span class="sl"><select aria-label="Branches"><option>All Branches</option></select></span><label class="row cb"><input type="checkbox" checked>Show Remote Branches</label><span class="sl"><select style="width:79px" aria-label="Order"><option>Ancestor Order</option></select></span><button class="jt">Jump to:</button></div>
<div class="w"><table><colgroup><col style="width:65px"><col style="width:223px"><col style="width:94px"><col style="width:90px"><col></colgroup><thead><tr><th>Graph</th><th>Description</th><th>Date</th><th>Author</th><th>Commit</th></tr></thead><tbody>${wi.map((r,k)=>`<tr class="${k==9?'sel':''}"><td></td><td>${r[0]}</td><td>1 Aug 2017 ${r[1]}</td><td style="text-overflow:clip">PAS &lt;schneider.pete</td><td>${r[2]}</td></tr>`).join('')}</tbody></table>
${graph(65,266,17,[10,19,28,37,46],[[B,[[0,0],[0,16]]],[R,[[1,1],[1,13.6],[0,14]]],[R,[[3,3],[1,3.4]]],[R,[[2,11],[1,11.5]]],[G,[[2,2],[2,13.6],[1,14],[1,14.6],[0,15]]],[Y,[[2,2],[3,2.4],[3,13.6],[2,14],[2,14.6],[0,15]]],[Y,[[2,8],[3,8.4]]],[V,[[2,6],[4,6.4],[4,13.6],[3,14],[3,14.6],[1,15],[1,15.6],[0,16]]],[B,[[3,9],[0,9.4]]],[B,[[2,13],[0,13.4]]]],[[B,0,0,1],[R,1,1],[G,2,2],[Y,3,3],[Y,3,4],[G,2,5],[G,2,6],[V,4,7],[G,2,8],[Y,3,9],[Y,3,10],[G,2,11],[R,1,12],[G,2,13],[B,0,14],[B,0,15],[B,0,16]],{r:2.8})}</div>`);
</script>
</body>
</html>
